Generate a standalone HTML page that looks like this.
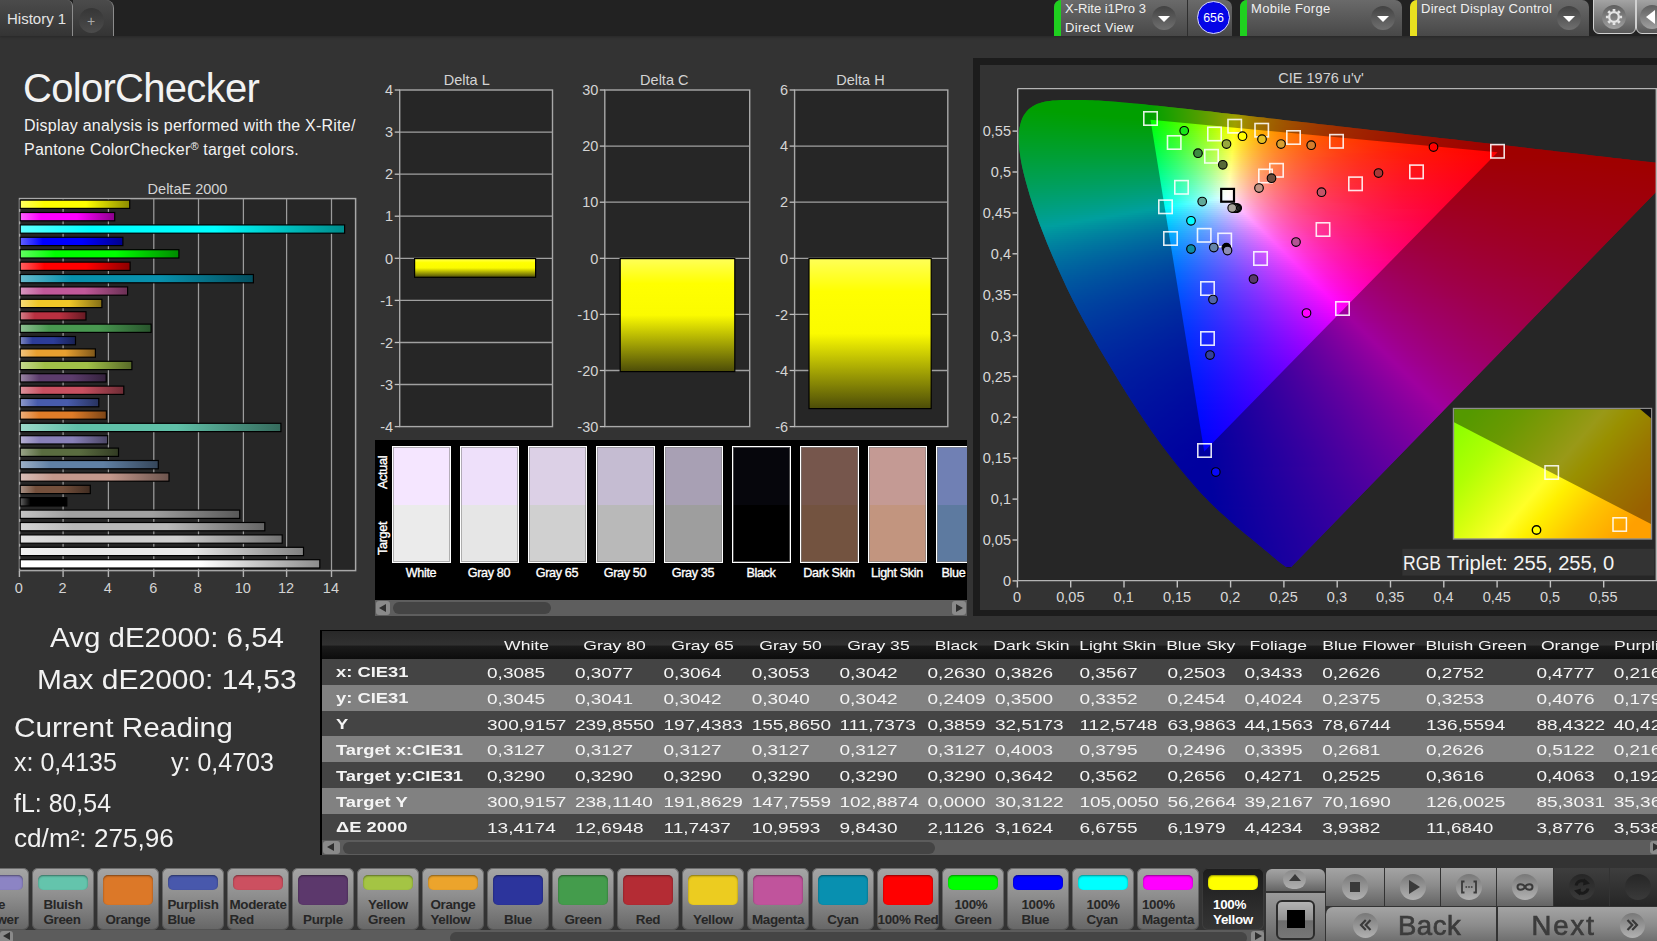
<!DOCTYPE html>
<html lang="en"><head><meta charset="utf-8"><title>ColorChecker</title>
<style>
html,body{margin:0;padding:0}
body{width:1657px;height:941px;overflow:hidden;background:#333;font-family:"Liberation Sans",sans-serif;color:#eee;position:relative}
.abs{position:absolute}
.t{position:absolute;white-space:nowrap;line-height:1}
svg{position:absolute;overflow:hidden}
svg text{font-family:"Liberation Sans",sans-serif}
#topbar{position:absolute;left:0;top:0;width:1657px;height:36.4px;background:#222;box-shadow:0 1px 2px #282828}
.tab{position:absolute;top:0;height:36px;background:linear-gradient(#4b4b4b,#343434);border-right:1px solid #8c8c8c;box-sizing:border-box}
.ibtn{position:absolute;top:0;height:36px;background:linear-gradient(#6a6a6a,#484848);border-radius:7px 7px 0 0;overflow:hidden}
.ibtn .stripe{position:absolute;left:0;top:0;width:7px;height:36px}
.ibtn .lbl{position:absolute;left:11px;font-size:13px;color:#f0f0f0;white-space:nowrap;line-height:1}
.dd{position:absolute;width:24px;height:24px;border-radius:12px;background:linear-gradient(#424242,#707070)}
.dd:after{content:"";position:absolute;left:6px;top:10px;border-left:6px solid transparent;border-right:6px solid transparent;border-top:6px solid #fff}
#cie i{display:block;height:2px}
.cb{position:absolute;top:8px;width:62.6px;height:62px;border-radius:6px;background:linear-gradient(#a6a6a6,#8e8e8e 45%,#666 100%);box-shadow:inset 0 0 0 1px rgba(70,70,70,.6)}
.cb.sel{background:linear-gradient(#1c1c1c,#353535)}
.cb .chip{position:absolute;left:6px;top:7px;width:50px;border-radius:5px;box-shadow:inset 0 1px 2px rgba(0,0,0,.45)}
.cb .lb{position:absolute;left:0;width:100%;text-align:center;font-size:13.4px;font-weight:bold;color:#262626;line-height:15.2px;letter-spacing:-.3px;white-space:nowrap}
.cb .lb span{display:inline-block;text-align:left}
.cb.sel .lb{color:#fff}

</style></head>
<body>
<div id="topbar">
<div class="tab" style="left:0;width:73px;border-radius:0 6px 0 0"><span class="t" style="left:7px;top:11px;font-size:15px;color:#e4e4e4">History 1</span></div>
<div class="tab" style="left:73px;width:41px;border-radius:0 8px 0 0"><div class="abs" style="left:6px;top:8px;width:25px;height:25px;border-radius:13px;background:linear-gradient(#363636,#4b4b4b)"></div><span class="t" style="left:14px;top:13.5px;font-size:14px;color:#a8a8a8">+</span></div>

<div class="ibtn" style="left:1054px;width:178px">
 <div class="stripe" style="background:#1fd01f"></div>
 <span class="lbl" style="top:2px">X-Rite i1Pro 3</span>
 <span class="lbl" style="top:21px;letter-spacing:.3px">Direct View</span>
 <div class="dd" style="left:98px;top:6px"></div>
 <div class="abs" style="left:133px;top:0;width:1px;height:36px;background:#2e2e2e"></div>
 <div class="abs" style="left:143px;top:1px;width:31px;height:31px;border-radius:17px;background:#0505e6;border:1px solid #d8d8ff"><span class="t" style="left:0;top:9.5px;width:31px;text-align:center;font-size:12.4px;color:#fff">656</span></div>
</div>
<div class="ibtn" style="left:1240px;width:162px">
 <div class="stripe" style="background:#1fd01f"></div>
 <span class="lbl" style="top:2px;letter-spacing:.3px">Mobile Forge</span>
 <div class="dd" style="left:131px;top:6px"></div>
</div>
<div class="ibtn" style="left:1410px;width:179px">
 <div class="stripe" style="background:#e8e020"></div>
 <span class="lbl" style="top:2px;letter-spacing:.25px">Direct Display Control</span>
 <div class="dd" style="left:147px;top:6px"></div>
</div>
<div class="abs" style="left:1593.2px;top:-6.7px;width:40.5px;height:38.6px;border:1px solid #d0d0d0;border-radius:6px;background:linear-gradient(#a8a8a8 10%,#585858 100%)">
 <div class="abs" style="left:8.3px;top:10.2px;width:24px;height:24px;border-radius:12px;background:linear-gradient(#5e5e5e,#a0a0a0)"></div>
 <svg style="left:9.3px;top:11.2px" width="22" height="22" viewBox="-11 -11 22 22"><g fill="none" stroke="#e4e4e4"><circle r="4.85" stroke-width="2.3"/><path stroke-width="2.7" d="M0-8.1V-5.6M0 8.1V5.6M-8.1 0H-5.6M8.1 0H5.6M-5.73-5.73L-3.96-3.96M5.73 5.73L3.96 3.96M-5.73 5.73L-3.96 3.96M5.73-5.73L3.96-3.96"/></g></svg>
</div>
<div class="abs" style="left:1636px;top:-6.7px;width:40px;height:38.6px;border:1px solid #d0d0d0;border-radius:6px;background:linear-gradient(#a8a8a8 10%,#585858 100%)">
 <div class="abs" style="left:3.2px;top:10.2px;width:24px;height:24px;border-radius:12px;background:linear-gradient(#5e5e5e,#a0a0a0)"></div>
 <div class="abs" style="left:9.2px;top:15.2px;border-top:7px solid transparent;border-bottom:7px solid transparent;border-right:9px solid #fff"></div>
</div>
</div>
<span class="t" style="left:23px;top:68px;font-size:40px;color:#f2f2f2;letter-spacing:-0.7px">ColorChecker</span>
<span class="t" style="left:24px;top:118px;font-size:16px;color:#f2f2f2;letter-spacing:.23px">Display analysis is performed with the X-Rite/</span>
<span class="t" style="left:24px;top:140.5px;font-size:16px;color:#f2f2f2;letter-spacing:.23px">Pantone ColorChecker<span style="font-size:11px;vertical-align:4.5px;letter-spacing:0">®</span> target colors.</span>
<svg style="left:0;top:180px" width="372" height="430" viewBox="0 180 372 430">
<defs>
<linearGradient id="b0"><stop offset="0" stop-color="#ffff61"/><stop offset=".22" stop-color="#ffff00"/><stop offset=".6" stop-color="#ffff00"/><stop offset="1" stop-color="#8c8c00"/></linearGradient>
<linearGradient id="b1"><stop offset="0" stop-color="#ff61ff"/><stop offset=".22" stop-color="#ff00ff"/><stop offset=".6" stop-color="#ff00ff"/><stop offset="1" stop-color="#8c008c"/></linearGradient>
<linearGradient id="b2"><stop offset="0" stop-color="#61ffff"/><stop offset=".22" stop-color="#00ffff"/><stop offset=".6" stop-color="#00ffff"/><stop offset="1" stop-color="#008c8c"/></linearGradient>
<linearGradient id="b3"><stop offset="0" stop-color="#6161ff"/><stop offset=".22" stop-color="#0000ff"/><stop offset=".6" stop-color="#0000ff"/><stop offset="1" stop-color="#00008c"/></linearGradient>
<linearGradient id="b4"><stop offset="0" stop-color="#61ff61"/><stop offset=".22" stop-color="#00ff00"/><stop offset=".6" stop-color="#00ff00"/><stop offset="1" stop-color="#008c00"/></linearGradient>
<linearGradient id="b5"><stop offset="0" stop-color="#ff6161"/><stop offset=".22" stop-color="#ff0000"/><stop offset=".6" stop-color="#ff0000"/><stop offset="1" stop-color="#8c0000"/></linearGradient>
<linearGradient id="b6"><stop offset="0" stop-color="#66bacc"/><stop offset=".22" stop-color="#0890ac"/><stop offset=".6" stop-color="#0890ac"/><stop offset="1" stop-color="#044f5f"/></linearGradient>
<linearGradient id="b7"><stop offset="0" stop-color="#d897bf"/><stop offset=".22" stop-color="#c05898"/><stop offset=".6" stop-color="#c05898"/><stop offset="1" stop-color="#6a3054"/></linearGradient>
<linearGradient id="b8"><stop offset="0" stop-color="#f6dd7a"/><stop offset=".22" stop-color="#f0c828"/><stop offset=".6" stop-color="#f0c828"/><stop offset="1" stop-color="#846e16"/></linearGradient>
<linearGradient id="b9"><stop offset="0" stop-color="#d37f89"/><stop offset=".22" stop-color="#b83040"/><stop offset=".6" stop-color="#b83040"/><stop offset="1" stop-color="#651a23"/></linearGradient>
<linearGradient id="b10"><stop offset="0" stop-color="#8ebf92"/><stop offset=".22" stop-color="#489850"/><stop offset=".6" stop-color="#489850"/><stop offset="1" stop-color="#28542c"/></linearGradient>
<linearGradient id="b11"><stop offset="0" stop-color="#7c86bf"/><stop offset=".22" stop-color="#2c3c98"/><stop offset=".6" stop-color="#2c3c98"/><stop offset="1" stop-color="#182154"/></linearGradient>
<linearGradient id="b12"><stop offset="0" stop-color="#f1c47f"/><stop offset=".22" stop-color="#e8a030"/><stop offset=".6" stop-color="#e8a030"/><stop offset="1" stop-color="#80581a"/></linearGradient>
<linearGradient id="b13"><stop offset="0" stop-color="#c4d88e"/><stop offset=".22" stop-color="#a0c048"/><stop offset=".6" stop-color="#a0c048"/><stop offset="1" stop-color="#586a28"/></linearGradient>
<linearGradient id="b14"><stop offset="0" stop-color="#9a86a4"/><stop offset=".22" stop-color="#5c3c6c"/><stop offset=".6" stop-color="#5c3c6c"/><stop offset="1" stop-color="#33213b"/></linearGradient>
<linearGradient id="b15"><stop offset="0" stop-color="#dd929c"/><stop offset=".22" stop-color="#c85060"/><stop offset=".6" stop-color="#c85060"/><stop offset="1" stop-color="#6e2c35"/></linearGradient>
<linearGradient id="b16"><stop offset="0" stop-color="#8e9acc"/><stop offset=".22" stop-color="#485cac"/><stop offset=".6" stop-color="#485cac"/><stop offset="1" stop-color="#28335f"/></linearGradient>
<linearGradient id="b17"><stop offset="0" stop-color="#ecae7a"/><stop offset=".22" stop-color="#e07c28"/><stop offset=".6" stop-color="#e07c28"/><stop offset="1" stop-color="#7b4416"/></linearGradient>
<linearGradient id="b18"><stop offset="0" stop-color="#9cd8c9"/><stop offset=".22" stop-color="#60c0a8"/><stop offset=".6" stop-color="#60c0a8"/><stop offset="1" stop-color="#356a5c"/></linearGradient>
<linearGradient id="b19"><stop offset="0" stop-color="#b5b0d3"/><stop offset=".22" stop-color="#8880b8"/><stop offset=".6" stop-color="#8880b8"/><stop offset="1" stop-color="#4b4665"/></linearGradient>
<linearGradient id="b20"><stop offset="0" stop-color="#99a489"/><stop offset=".22" stop-color="#5a6c40"/><stop offset=".6" stop-color="#5a6c40"/><stop offset="1" stop-color="#323b23"/></linearGradient>
<linearGradient id="b21"><stop offset="0" stop-color="#9cb0c7"/><stop offset=".22" stop-color="#6080a4"/><stop offset=".6" stop-color="#6080a4"/><stop offset="1" stop-color="#35465a"/></linearGradient>
<linearGradient id="b22"><stop offset="0" stop-color="#dabfb8"/><stop offset=".22" stop-color="#c4988c"/><stop offset=".6" stop-color="#c4988c"/><stop offset="1" stop-color="#6c544d"/></linearGradient>
<linearGradient id="b23"><stop offset="0" stop-color="#a99286"/><stop offset=".22" stop-color="#74503c"/><stop offset=".6" stop-color="#74503c"/><stop offset="1" stop-color="#402c21"/></linearGradient>
<linearGradient id="b24"><stop offset="0" stop-color="#616161"/><stop offset=".22" stop-color="#000000"/><stop offset=".6" stop-color="#000000"/><stop offset="1" stop-color="#000000"/></linearGradient>
<linearGradient id="b25"><stop offset="0" stop-color="#c4c4c4"/><stop offset=".22" stop-color="#a0a0a0"/><stop offset=".6" stop-color="#a0a0a0"/><stop offset="1" stop-color="#585858"/></linearGradient>
<linearGradient id="b26"><stop offset="0" stop-color="#d3d3d3"/><stop offset=".22" stop-color="#b8b8b8"/><stop offset=".6" stop-color="#b8b8b8"/><stop offset="1" stop-color="#656565"/></linearGradient>
<linearGradient id="b27"><stop offset="0" stop-color="#e2e2e2"/><stop offset=".22" stop-color="#d0d0d0"/><stop offset=".6" stop-color="#d0d0d0"/><stop offset="1" stop-color="#727272"/></linearGradient>
<linearGradient id="b28"><stop offset="0" stop-color="#f1f1f1"/><stop offset=".22" stop-color="#e8e8e8"/><stop offset=".6" stop-color="#e8e8e8"/><stop offset="1" stop-color="#808080"/></linearGradient>
<linearGradient id="b29"><stop offset="0" stop-color="#ffffff"/><stop offset=".22" stop-color="#ffffff"/><stop offset=".6" stop-color="#ffffff"/><stop offset="1" stop-color="#8c8c8c"/></linearGradient>
</defs>
<rect x="19.5" y="198.6" width="336.1" height="372" fill="#262626" stroke="#a8a8a8" stroke-width="1.5"/>
<path d="M63.1 199V570" stroke="#9c9c9c" stroke-width="1.25"/>
<path d="M108.4 199V570" stroke="#9c9c9c" stroke-width="1.25"/>
<path d="M153.8 199V570" stroke="#9c9c9c" stroke-width="1.25"/>
<path d="M198.5 199V570" stroke="#9c9c9c" stroke-width="1.25"/>
<path d="M243.4 199V570" stroke="#9c9c9c" stroke-width="1.25"/>
<path d="M286.6 199V570" stroke="#9c9c9c" stroke-width="1.25"/>
<path d="M331.5 199V570" stroke="#9c9c9c" stroke-width="1.25"/>
<path d="M19.4 571V577" stroke="#b4b4b4" stroke-width="1.4"/>
<text x="18.8" y="592.8" font-size="14.5" fill="#d4d4d4" text-anchor="middle">0</text>
<path d="M63.1 571V577" stroke="#b4b4b4" stroke-width="1.4"/>
<text x="62.5" y="592.8" font-size="14.5" fill="#d4d4d4" text-anchor="middle">2</text>
<path d="M108.4 571V577" stroke="#b4b4b4" stroke-width="1.4"/>
<text x="107.8" y="592.8" font-size="14.5" fill="#d4d4d4" text-anchor="middle">4</text>
<path d="M153.8 571V577" stroke="#b4b4b4" stroke-width="1.4"/>
<text x="153.2" y="592.8" font-size="14.5" fill="#d4d4d4" text-anchor="middle">6</text>
<path d="M198.5 571V577" stroke="#b4b4b4" stroke-width="1.4"/>
<text x="197.9" y="592.8" font-size="14.5" fill="#d4d4d4" text-anchor="middle">8</text>
<path d="M243.4 571V577" stroke="#b4b4b4" stroke-width="1.4"/>
<text x="242.8" y="592.8" font-size="14.5" fill="#d4d4d4" text-anchor="middle">10</text>
<path d="M286.6 571V577" stroke="#b4b4b4" stroke-width="1.4"/>
<text x="286.0" y="592.8" font-size="14.5" fill="#d4d4d4" text-anchor="middle">12</text>
<path d="M331.5 571V577" stroke="#b4b4b4" stroke-width="1.4"/>
<text x="330.9" y="592.8" font-size="14.5" fill="#d4d4d4" text-anchor="middle">14</text>
<rect x="20.2" y="200.10" width="109.5" height="8.3" fill="url(#b0)" stroke="#000" stroke-width="1.2"/>
<rect x="20.2" y="212.50" width="94.5" height="8.3" fill="url(#b1)" stroke="#000" stroke-width="1.2"/>
<rect x="20.2" y="224.90" width="324.4" height="8.3" fill="url(#b2)" stroke="#000" stroke-width="1.2"/>
<rect x="20.2" y="237.30" width="102.7" height="8.3" fill="url(#b3)" stroke="#000" stroke-width="1.2"/>
<rect x="20.2" y="249.70" width="158.7" height="8.3" fill="url(#b4)" stroke="#000" stroke-width="1.2"/>
<rect x="20.2" y="262.10" width="109.9" height="8.3" fill="url(#b5)" stroke="#000" stroke-width="1.2"/>
<rect x="20.2" y="274.50" width="233.2" height="8.3" fill="url(#b6)" stroke="#000" stroke-width="1.2"/>
<rect x="20.2" y="286.90" width="107.4" height="8.3" fill="url(#b7)" stroke="#000" stroke-width="1.2"/>
<rect x="20.2" y="299.30" width="81.7" height="8.3" fill="url(#b8)" stroke="#000" stroke-width="1.2"/>
<rect x="20.2" y="311.70" width="65.8" height="8.3" fill="url(#b9)" stroke="#000" stroke-width="1.2"/>
<rect x="20.2" y="324.10" width="130.9" height="8.3" fill="url(#b10)" stroke="#000" stroke-width="1.2"/>
<rect x="20.2" y="336.50" width="55.3" height="8.3" fill="url(#b11)" stroke="#000" stroke-width="1.2"/>
<rect x="20.2" y="348.90" width="75.2" height="8.3" fill="url(#b12)" stroke="#000" stroke-width="1.2"/>
<rect x="20.2" y="361.30" width="111.7" height="8.3" fill="url(#b13)" stroke="#000" stroke-width="1.2"/>
<rect x="20.2" y="373.70" width="86.0" height="8.3" fill="url(#b14)" stroke="#000" stroke-width="1.2"/>
<rect x="20.2" y="386.10" width="103.6" height="8.3" fill="url(#b15)" stroke="#000" stroke-width="1.2"/>
<rect x="20.2" y="398.50" width="78.6" height="8.3" fill="url(#b16)" stroke="#000" stroke-width="1.2"/>
<rect x="20.2" y="410.90" width="86.2" height="8.3" fill="url(#b17)" stroke="#000" stroke-width="1.2"/>
<rect x="20.2" y="423.30" width="260.7" height="8.3" fill="url(#b18)" stroke="#000" stroke-width="1.2"/>
<rect x="20.2" y="435.70" width="87.5" height="8.3" fill="url(#b19)" stroke="#000" stroke-width="1.2"/>
<rect x="20.2" y="448.10" width="98.3" height="8.3" fill="url(#b20)" stroke="#000" stroke-width="1.2"/>
<rect x="20.2" y="460.50" width="138.1" height="8.3" fill="url(#b21)" stroke="#000" stroke-width="1.2"/>
<rect x="20.2" y="472.90" width="148.8" height="8.3" fill="url(#b22)" stroke="#000" stroke-width="1.2"/>
<rect x="20.2" y="485.30" width="70.1" height="8.3" fill="url(#b23)" stroke="#000" stroke-width="1.2"/>
<rect x="20.2" y="497.70" width="46.6" height="8.3" fill="url(#b24)" stroke="#000" stroke-width="1.2"/>
<rect x="20.2" y="510.10" width="219.5" height="8.3" fill="url(#b25)" stroke="#000" stroke-width="1.2"/>
<rect x="20.2" y="522.50" width="244.6" height="8.3" fill="url(#b26)" stroke="#000" stroke-width="1.2"/>
<rect x="20.2" y="534.90" width="262.0" height="8.3" fill="url(#b27)" stroke="#000" stroke-width="1.2"/>
<rect x="20.2" y="547.30" width="283.3" height="8.3" fill="url(#b28)" stroke="#000" stroke-width="1.2"/>
<rect x="20.2" y="559.70" width="299.6" height="8.3" fill="url(#b29)" stroke="#000" stroke-width="1.2"/>
<text x="187.5" y="193.8" font-size="14.5" fill="#d4d4d4" text-anchor="middle">DeltaE 2000</text>
</svg>
<span class="t" style="left:50px;top:623.9px;font-size:28.1px;color:#f2f2f2;transform:scaleX(1.05);transform-origin:0 0">Avg dE2000: 6,54</span>
<span class="t" style="left:37px;top:664.6px;font-size:28.2px;color:#f2f2f2;transform:scaleX(1.062);transform-origin:0 0">Max dE2000: 14,53</span>
<span class="t" style="left:14px;top:712.6px;font-size:28.35px;color:#f2f2f2;transform:scaleX(1.052);transform-origin:0 0">Current Reading</span>
<span class="t" style="left:14px;top:749.9px;font-size:25.1px;color:#f2f2f2;transform:scaleX(0.996);transform-origin:0 0">x: 0,4135</span>
<span class="t" style="left:171px;top:749.9px;font-size:25.1px;color:#f2f2f2;transform:scaleX(0.996);transform-origin:0 0">y: 0,4703</span>
<span class="t" style="left:14px;top:791.3px;font-size:25.1px;color:#f2f2f2;transform:scaleX(0.993);transform-origin:0 0">fL: 80,54</span>
<span class="t" style="left:14px;top:825.8px;font-size:25.1px;color:#f2f2f2;transform:scaleX(1.042);transform-origin:0 0">cd/m²: 275,96</span>
<svg style="left:370px;top:60px" width="596" height="379" viewBox="370 60 596 379">
<defs><linearGradient id="yb" x1="0" y1="0" x2="0" y2="1"><stop offset="0" stop-color="#ffff58"/><stop offset=".22" stop-color="#ffff00"/><stop offset=".5" stop-color="#fbfb00"/><stop offset="1" stop-color="#4c4c08"/></linearGradient></defs>
<rect x="399.7" y="90.0" width="152.8" height="336.6" fill="#262626" stroke="#a8a8a8" stroke-width="1.4"/>
<path d="M394.7 90.0H399.7" stroke="#c0c0c0" stroke-width="1.3"/>
<text x="393.2" y="95.2" font-size="14.5" fill="#d4d4d4" text-anchor="end">4</text>
<path d="M399.7 132.1H552.5" stroke="#a0a0a0" stroke-width="1.3"/>
<path d="M394.7 132.1H399.7" stroke="#c0c0c0" stroke-width="1.3"/>
<text x="393.2" y="137.3" font-size="14.5" fill="#d4d4d4" text-anchor="end">3</text>
<path d="M399.7 174.2H552.5" stroke="#a0a0a0" stroke-width="1.3"/>
<path d="M394.7 174.2H399.7" stroke="#c0c0c0" stroke-width="1.3"/>
<text x="393.2" y="179.3" font-size="14.5" fill="#d4d4d4" text-anchor="end">2</text>
<path d="M399.7 216.2H552.5" stroke="#a0a0a0" stroke-width="1.3"/>
<path d="M394.7 216.2H399.7" stroke="#c0c0c0" stroke-width="1.3"/>
<text x="393.2" y="221.4" font-size="14.5" fill="#d4d4d4" text-anchor="end">1</text>
<path d="M399.7 258.3H552.5" stroke="#a0a0a0" stroke-width="1.3"/>
<path d="M394.7 258.3H399.7" stroke="#c0c0c0" stroke-width="1.3"/>
<text x="393.2" y="263.5" font-size="14.5" fill="#d4d4d4" text-anchor="end">0</text>
<path d="M399.7 300.4H552.5" stroke="#a0a0a0" stroke-width="1.3"/>
<path d="M394.7 300.4H399.7" stroke="#c0c0c0" stroke-width="1.3"/>
<text x="393.2" y="305.6" font-size="14.5" fill="#d4d4d4" text-anchor="end">-1</text>
<path d="M399.7 342.5H552.5" stroke="#a0a0a0" stroke-width="1.3"/>
<path d="M394.7 342.5H399.7" stroke="#c0c0c0" stroke-width="1.3"/>
<text x="393.2" y="347.7" font-size="14.5" fill="#d4d4d4" text-anchor="end">-2</text>
<path d="M399.7 384.5H552.5" stroke="#a0a0a0" stroke-width="1.3"/>
<path d="M394.7 384.5H399.7" stroke="#c0c0c0" stroke-width="1.3"/>
<text x="393.2" y="389.7" font-size="14.5" fill="#d4d4d4" text-anchor="end">-3</text>
<path d="M394.7 426.6H399.7" stroke="#c0c0c0" stroke-width="1.3"/>
<text x="393.2" y="431.8" font-size="14.5" fill="#d4d4d4" text-anchor="end">-4</text>
<rect x="414.6" y="258.6" width="121.0" height="18.7" fill="url(#yb)" stroke="#000" stroke-width="1.2"/>
<text x="466.8" y="85" font-size="14.5" fill="#d4d4d4" text-anchor="middle">Delta L</text>
<rect x="604.8" y="90.0" width="144.9" height="336.6" fill="#262626" stroke="#a8a8a8" stroke-width="1.4"/>
<path d="M599.8 90.0H604.8" stroke="#c0c0c0" stroke-width="1.3"/>
<text x="598.3" y="95.2" font-size="14.5" fill="#d4d4d4" text-anchor="end">30</text>
<path d="M604.8 146.1H749.7" stroke="#a0a0a0" stroke-width="1.3"/>
<path d="M599.8 146.1H604.8" stroke="#c0c0c0" stroke-width="1.3"/>
<text x="598.3" y="151.3" font-size="14.5" fill="#d4d4d4" text-anchor="end">20</text>
<path d="M604.8 202.2H749.7" stroke="#a0a0a0" stroke-width="1.3"/>
<path d="M599.8 202.2H604.8" stroke="#c0c0c0" stroke-width="1.3"/>
<text x="598.3" y="207.4" font-size="14.5" fill="#d4d4d4" text-anchor="end">10</text>
<path d="M604.8 258.3H749.7" stroke="#a0a0a0" stroke-width="1.3"/>
<path d="M599.8 258.3H604.8" stroke="#c0c0c0" stroke-width="1.3"/>
<text x="598.3" y="263.5" font-size="14.5" fill="#d4d4d4" text-anchor="end">0</text>
<path d="M604.8 314.4H749.7" stroke="#a0a0a0" stroke-width="1.3"/>
<path d="M599.8 314.4H604.8" stroke="#c0c0c0" stroke-width="1.3"/>
<text x="598.3" y="319.6" font-size="14.5" fill="#d4d4d4" text-anchor="end">-10</text>
<path d="M604.8 370.5H749.7" stroke="#a0a0a0" stroke-width="1.3"/>
<path d="M599.8 370.5H604.8" stroke="#c0c0c0" stroke-width="1.3"/>
<text x="598.3" y="375.7" font-size="14.5" fill="#d4d4d4" text-anchor="end">-20</text>
<path d="M599.8 426.6H604.8" stroke="#c0c0c0" stroke-width="1.3"/>
<text x="598.3" y="431.8" font-size="14.5" fill="#d4d4d4" text-anchor="end">-30</text>
<rect x="620.2" y="258.6" width="114.6" height="113.0" fill="url(#yb)" stroke="#000" stroke-width="1.2"/>
<text x="664.3" y="85" font-size="14.5" fill="#d4d4d4" text-anchor="middle">Delta C</text>
<rect x="794.6" y="90.0" width="153.2" height="336.6" fill="#262626" stroke="#a8a8a8" stroke-width="1.4"/>
<path d="M789.6 90.0H794.6" stroke="#c0c0c0" stroke-width="1.3"/>
<text x="788.1" y="95.2" font-size="14.5" fill="#d4d4d4" text-anchor="end">6</text>
<path d="M794.6 146.1H947.8" stroke="#a0a0a0" stroke-width="1.3"/>
<path d="M789.6 146.1H794.6" stroke="#c0c0c0" stroke-width="1.3"/>
<text x="788.1" y="151.3" font-size="14.5" fill="#d4d4d4" text-anchor="end">4</text>
<path d="M794.6 202.2H947.8" stroke="#a0a0a0" stroke-width="1.3"/>
<path d="M789.6 202.2H794.6" stroke="#c0c0c0" stroke-width="1.3"/>
<text x="788.1" y="207.4" font-size="14.5" fill="#d4d4d4" text-anchor="end">2</text>
<path d="M794.6 258.3H947.8" stroke="#a0a0a0" stroke-width="1.3"/>
<path d="M789.6 258.3H794.6" stroke="#c0c0c0" stroke-width="1.3"/>
<text x="788.1" y="263.5" font-size="14.5" fill="#d4d4d4" text-anchor="end">0</text>
<path d="M794.6 314.4H947.8" stroke="#a0a0a0" stroke-width="1.3"/>
<path d="M789.6 314.4H794.6" stroke="#c0c0c0" stroke-width="1.3"/>
<text x="788.1" y="319.6" font-size="14.5" fill="#d4d4d4" text-anchor="end">-2</text>
<path d="M794.6 370.5H947.8" stroke="#a0a0a0" stroke-width="1.3"/>
<path d="M789.6 370.5H794.6" stroke="#c0c0c0" stroke-width="1.3"/>
<text x="788.1" y="375.7" font-size="14.5" fill="#d4d4d4" text-anchor="end">-4</text>
<path d="M789.6 426.6H794.6" stroke="#c0c0c0" stroke-width="1.3"/>
<text x="788.1" y="431.8" font-size="14.5" fill="#d4d4d4" text-anchor="end">-6</text>
<rect x="809.0" y="258.6" width="122.2" height="150.0" fill="url(#yb)" stroke="#000" stroke-width="1.2"/>
<text x="860.5" y="85" font-size="14.5" fill="#d4d4d4" text-anchor="middle">Delta H</text>
</svg>
<div class="abs" style="left:375px;top:439.5px;width:592px;height:160.5px;background:#000;overflow:hidden">
<span class="t" style="left:2px;top:49px;font-size:12.6px;color:#fff;transform:rotate(-90deg);transform-origin:0 0;-webkit-text-stroke:.35px #fff;letter-spacing:-.3px">Actual</span>
<span class="t" style="left:2px;top:115px;font-size:12.6px;color:#fff;transform:rotate(-90deg);transform-origin:0 0;-webkit-text-stroke:.35px #fff;letter-spacing:-.3px">Target</span>
<div class="abs" style="left:17px;top:6.5px;width:56.7px;height:115px;border:1px solid #fff;background:linear-gradient(#f5e6ff 50.4%,#ebebeb 50.4%);box-shadow:inset 0 0 0 1px rgba(128,128,128,.55)"></div>
<span class="t" style="left:2px;top:127.8px;width:88px;text-align:center;font-size:12.6px;color:#fff;-webkit-text-stroke:.35px #fff;letter-spacing:-.35px">White</span>
<div class="abs" style="left:85px;top:6.5px;width:56.7px;height:115px;border:1px solid #fff;background:linear-gradient(#eee0fa 50.4%,#e6e6e6 50.4%);box-shadow:inset 0 0 0 1px rgba(128,128,128,.55)"></div>
<span class="t" style="left:70px;top:127.8px;width:88px;text-align:center;font-size:12.6px;color:#fff;-webkit-text-stroke:.35px #fff;letter-spacing:-.35px">Gray 80</span>
<div class="abs" style="left:153px;top:6.5px;width:56.7px;height:115px;border:1px solid #fff;background:linear-gradient(#dcd0e6 50.4%,#d0d0d0 50.4%);box-shadow:inset 0 0 0 1px rgba(128,128,128,.55)"></div>
<span class="t" style="left:138px;top:127.8px;width:88px;text-align:center;font-size:12.6px;color:#fff;-webkit-text-stroke:.35px #fff;letter-spacing:-.35px">Gray 65</span>
<div class="abs" style="left:221px;top:6.5px;width:56.7px;height:115px;border:1px solid #fff;background:linear-gradient(#c5bcd2 50.4%,#b9b9b9 50.4%);box-shadow:inset 0 0 0 1px rgba(128,128,128,.55)"></div>
<span class="t" style="left:206px;top:127.8px;width:88px;text-align:center;font-size:12.6px;color:#fff;-webkit-text-stroke:.35px #fff;letter-spacing:-.35px">Gray 50</span>
<div class="abs" style="left:289px;top:6.5px;width:56.7px;height:115px;border:1px solid #fff;background:linear-gradient(#a8a0b4 50.4%,#9e9e9e 50.4%);box-shadow:inset 0 0 0 1px rgba(128,128,128,.55)"></div>
<span class="t" style="left:274px;top:127.8px;width:88px;text-align:center;font-size:12.6px;color:#fff;-webkit-text-stroke:.35px #fff;letter-spacing:-.35px">Gray 35</span>
<div class="abs" style="left:357px;top:6.5px;width:56.7px;height:115px;border:1px solid #fff;background:linear-gradient(#06060c 50.4%,#000000 50.4%);box-shadow:inset 0 0 0 1px rgba(128,128,128,.55)"></div>
<span class="t" style="left:342px;top:127.8px;width:88px;text-align:center;font-size:12.6px;color:#fff;-webkit-text-stroke:.35px #fff;letter-spacing:-.35px">Black</span>
<div class="abs" style="left:425px;top:6.5px;width:56.7px;height:115px;border:1px solid #fff;background:linear-gradient(#76564c 50.4%,#735340 50.4%);box-shadow:inset 0 0 0 1px rgba(128,128,128,.55)"></div>
<span class="t" style="left:410px;top:127.8px;width:88px;text-align:center;font-size:12.6px;color:#fff;-webkit-text-stroke:.35px #fff;letter-spacing:-.35px">Dark Skin</span>
<div class="abs" style="left:493px;top:6.5px;width:56.7px;height:115px;border:1px solid #fff;background:linear-gradient(#c49a94 50.4%,#c2957f 50.4%);box-shadow:inset 0 0 0 1px rgba(128,128,128,.55)"></div>
<span class="t" style="left:478px;top:127.8px;width:88px;text-align:center;font-size:12.6px;color:#fff;-webkit-text-stroke:.35px #fff;letter-spacing:-.35px">Light Skin</span>
<div class="abs" style="left:561px;top:6.5px;width:56.7px;height:115px;border:1px solid #fff;background:linear-gradient(#7080b4 50.4%,#5d7aa0 50.4%);box-shadow:inset 0 0 0 1px rgba(128,128,128,.55)"></div>
<span class="t" style="left:546px;top:127.8px;width:88px;text-align:center;font-size:12.6px;color:#fff;-webkit-text-stroke:.35px #fff;letter-spacing:-.35px">Blue Sky</span>
</div>
<div class="abs" style="left:375px;top:600px;width:592px;height:16px;background:#5e5e5e"></div>
<div class="abs" style="left:393px;top:602px;width:158px;height:12px;border-radius:6px;background:#444"></div>
<div class="abs" style="left:376px;top:601px;width:14px;height:14px;border-radius:3px;background:#8a8a8a"></div><div class="abs" style="left:379px;top:603.5px;border-top:4.5px solid transparent;border-bottom:4.5px solid transparent;border-right:7px solid #2e2e2e"></div>
<div class="abs" style="left:952px;top:601px;width:14px;height:14px;border-radius:3px;background:#8a8a8a"></div><div class="abs" style="left:956px;top:603.5px;border-top:4.5px solid transparent;border-bottom:4.5px solid transparent;border-left:7px solid #2e2e2e"></div>
<div class="abs" style="left:973.2px;top:58.1px;width:690px;height:558.3px;background:#1c1c1c"></div>
<div class="abs" style="left:979.8px;top:64.7px;width:690px;height:545.4px;background:#333"></div>
<div id="cie" class="abs" style="left:1018px;top:89px;width:639px;height:492px;background:#262626;overflow:hidden">
<i></i>
<i></i>
<i></i>
<i></i>
<i></i>
<i style="background:linear-gradient(90deg,#0f0 43px,#0f0 68px)"></i>
<i style="background:linear-gradient(90deg,#0f0 22px,#0f0 103px)"></i>
<i style="background:linear-gradient(90deg,#0f0 16px,#0f0 125px)"></i>
<i style="background:linear-gradient(90deg,#0f0 12px,#0f0 130px,#2f0 145px)"></i>
<i style="background:linear-gradient(90deg,#0f0 9px,#0f0 130px,#2f0 145px,#52ff00 164px)"></i>
<i style="background:linear-gradient(90deg,#00ff03 6px,#0f0 28px,#0f0 131px,#3fff00 157px,#85ff00 182px)"></i>
<i style="background:linear-gradient(90deg,#00ff07 5px,#0f0 49px,#0f0 131px,#2bff00 149px,#5aff00 167px,#8bff00 184px,#bfff00 200px)"></i>
<i style="background:linear-gradient(90deg,#00ff0a 3px,#0f0 71px,#01ff00 132px,#39ff00 155px,#76ff00 177px,#b8ff00 198px,#fcff00 217px)"></i>
<i style="background:linear-gradient(90deg,#00ff0e 2px,#0f0 92px,#0f0 132px,#39ff00 155px,#76ff00 177px,#b8ff00 198px,#fcff00 217px,#fffe00 218px,#ffe200 226px,#ffc800 235px)"></i>
<i style="background:linear-gradient(90deg,#0f1 1px,#0f0 113px,#0f0 132px,#38ff00 155px,#76ff00 177px,#b9ff00 198px,#fdff00 217px,#ffca00 234px,#ffa000 252px)"></i>
<i style="background:linear-gradient(90deg,#00ff14 0px,#00ff01 132px,#3f0 153px,#73ff00 176px,#b5ff00 197px,#feff00 217px,#ffd700 229px,#ffb700 241px,#ff9a00 255px,#ff8100 270px)"></i>
<i style="background:linear-gradient(90deg,#00ff18 0px,#00ff05 133px,#3aff00 156px,#79ff00 178px,#b9ff00 198px,#feff00 217px,#ffd100 231px,#ffa900 247px,#ff8600 266px,#ff6a00 287px)"></i>
<i style="background:linear-gradient(90deg,#00ff1b 0px,#00ff09 133px,#37ff05 155px,#75ff00 177px,#b6ff00 197px,#ff0 217px,#ffe200 225px,#ffca00 233px,#ffb100 243px,#ff9c00 253px,#f70 276px,#ff5800 304px)"></i>
<i style="background:linear-gradient(90deg,#00ff1e 0px,#00ff0e 133px,#31ff0a 153px,#72ff05 176px,#b6ff00 197px,#fcff00 216px,#fffe00 217px,#ffde00 226px,#ffbf00 237px,#ffa700 247px,#ff9000 259px,#ff6900 287px,#ff4800 322px)"></i>
<i style="background:linear-gradient(90deg,#0f2 0px,#01ff12 134px,#3bff0e 157px,#78ff0a 178px,#baff06 198px,#fdff01 216px,#fffd01 217px,#ffd700 228px,#fb0 238px,#ffa000 250px,#ff8700 264px,#ff7000 280px,#ff5d00 297px,#ff3b00 339px)"></i>
<i style="background:linear-gradient(90deg,#00ff25 0px,#00ff17 134px,#38ff13 156px,#75ff0f 177px,#b7ff0b 197px,#fdff07 216px,#ffd603 228px,#ffb600 240px,#ff9800 254px,#ff7d00 270px,#f60 288px,#ff5200 308px,#ff4000 331px,#ff3000 357px)"></i>
<i style="background:linear-gradient(90deg,#00ff29 0px,#00ff1b 134px,#35ff18 155px,#75ff15 177px,#b7ff11 197px,#feff0d 216px,#ffd608 228px,#ffb305 241px,#ff9301 256px,#f70 274px,#ff5f00 294px,#ff4a00 317px,#ff3700 344px,#ff2700 374px)"></i>
<i style="background:linear-gradient(90deg,#00ff2c 0px,#01ff20 135px,#3aff1d 157px,#78ff1a 178px,#bbff16 198px,#ffff13 216px,#ffd20d 229px,#ffad09 243px,#ff8c04 260px,#ff6f01 279px,#ff5700 301px,#ff4100 327px,#ff2f00 357px,#ff1f00 391px)"></i>
<i style="background:linear-gradient(90deg,#00ff30 0px,#00ff24 135px,#36ff22 156px,#74ff1f 177px,#b7ff1c 197px,#fcff19 215px,#fffe19 216px,#ffe415 223px,#ffcb11 231px,#ffa80c 245px,#ff8607 263px,#ff6903 284px,#ff5000 308px,#ff3a00 337px,#ff2700 370px,#ff1700 409px)"></i>
<i style="background:linear-gradient(90deg,#0f3 0px,#00ff29 135px,#33ff27 155px,#74ff25 177px,#b4ff22 196px,#fffd1f 216px,#ffcd17 230px,#ffa510 246px,#ff820b 265px,#ff6306 288px,#ff4902 315px,#ff3400 346px,#ff2100 383px,#f10 426px)"></i>
<i style="background:linear-gradient(90deg,#00ff37 0px,#01ff2e 136px,#38ff2c 157px,#74ff2a 177px,#b1ff28 195px,#fdff25 215px,#fffd25 216px,#ffe320 223px,#ffc91b 231px,#ffa014 248px,#ff7b0d 269px,#ff5d08 293px,#ff4303 322px,#ff2d00 356px,#ff1b00 396px,#ff0b00 444px)"></i>
<i style="background:linear-gradient(90deg,#00ff3a 0px,#0f3 136px,#38ff31 157px,#74ff30 177px,#adff2e 194px,#feff2b 215px,#fffc2b 216px,#ffe226 223px,#ffc921 231px,#ff9d18 249px,#ff7710 271px,#ff580a 297px,#ff3e05 328px,#ff2800 365px,#ff1600 409px,#ff0600 461px)"></i>
<i style="background:linear-gradient(90deg,#00ff3e 0px,#00ff38 136px,#34ff37 156px,#74ff35 177px,#b8ff33 197px,#ffff32 215px,#ffe12b 223px,#ffc826 231px,#ffb020 240px,#ff9a1c 250px,#ff7413 273px,#ff540c 300px,#ff3a07 333px,#ff2402 373px,#f10 421px,#ff0200 478px)"></i>
<i style="background:linear-gradient(90deg,#00ff41 0px,#01ff3d 137px,#39ff3c 158px,#77ff3b 178px,#b9ff3a 197px,#fffe38 215px,#ffe031 223px,#ffc72b 231px,#ffad25 241px,#ff971f 251px,#ff7016 275px,#ff4f0e 305px,#ff3408 342px,#ff1d02 386px,#ff0900 446px,#f00 496px)"></i>
<i style="background:linear-gradient(90deg,#00ff45 0px,#00ff42 137px,#39ff41 158px,#76ff41 178px,#b5ff40 196px,#fffe3e 215px,#ffdf37 223px,#ffc32f 232px,#ffaa29 242px,#ff9223 253px,#ff7e1d 265px,#ff6a18 279px,#ff4a10 310px,#ff2e09 351px,#ff1703 402px,#f00 483px,#f00 514px)"></i>
<i style="background:linear-gradient(90deg,#00ff49 0px,#00ff47 137px,#33ff47 156px,#73ff46 177px,#aeff46 194px,#fffd45 215px,#ffdb3b 224px,#ffbf34 233px,#ffa62d 243px,#ff8e26 255px,#ff7820 268px,#ff661b 282px,#ff4512 315px,#ff2809 361px,#ff1003 419px,#f00 482px,#f00 531px)"></i>
<i style="background:linear-gradient(90deg,#00ff4d 0px,#01ff4c 138px,#38ff4c 158px,#73ff4c 177px,#aeff4c 194px,#feff4c 214px,#fffc4b 215px,#ffda41 224px,#ffbf39 233px,#ffa331 244px,#ff8b29 256px,#ff7523 270px,#ff611d 285px,#ff4113 320px,#ff220a 371px,#ff0b03 436px,#f00 480px,#f00 548px)"></i>
<i style="background:linear-gradient(90deg,#00ff50 0px,#00ff52 138px,#37ff52 158px,#73ff52 177px,#b6ff53 196px,#feff53 214px,#fffb52 215px,#ffd947 224px,#ffbb3d 234px,#ffa035 245px,#ff872d 258px,#ff7126 272px,#ff5d1f 288px,#ff3c15 325px,#ff2c0f 351px,#ff1d0b 381px,#ff0503 455px,#ff0001 478px,#f00 566px)"></i>
<i style="background:linear-gradient(90deg,#00ff54 0px,#00ff57 138px,#34ff58 157px,#76ff58 178px,#b6ff59 196px,#ffff5a 214px,#ffdc4e 223px,#ffbd43 233px,#ff9f39 245px,#ff8631 258px,#ff6f29 273px,#ff5b22 289px,#ff3916 328px,#ff2811 357px,#ff190b 390px,#ff0103 471px,#f00 583px)"></i>
<i style="background:linear-gradient(90deg,#00ff58 0px,#01ff5c 139px,#39ff5d 159px,#75ff5e 178px,#b2ff60 195px,#fffe60 214px,#ffdb54 223px,#ffb948 234px,#ff9c3d 246px,#ff8334 259px,#ff6d2c 274px,#ff5824 291px,#ff461e 310px,#ff3618 332px,#ff2612 360px,#ff170d 393px,#ff0004 474px,#f00 541px,#f00 600px)"></i>
<i style="background:linear-gradient(90deg,#00ff5c 0px,#00ff62 139px,#39ff63 159px,#75ff65 178px,#b3ff66 195px,#fffd67 214px,#ffd758 224px,#ffb64c 235px,#ff9941 247px,#ff7f37 261px,#ff682e 277px,#ff5526 294px,#ff4220 314px,#ff3219 337px,#ff160e 396px,#ff0006 472px,#f00 562px,#f00 618px)"></i>
<i style="background:linear-gradient(90deg,#00ff60 0px,#00ff67 139px,#32ff69 157px,#72ff6b 177px,#abff6d 193px,#fdff6f 213px,#fffc6e 214px,#ffd65e 224px,#ffb551 235px,#ff9645 248px,#ff7d3a 262px,#ff6631 278px,#ff5128 297px,#ff3f21 318px,#ff2f1b 341px,#ff1510 398px,#ff0008 470px,#f00 584px,#f00 635px)"></i>
<i style="background:linear-gradient(90deg,#00ff64 0px,#01ff6d 140px,#37ff6f 159px,#71ff71 177px,#b7ff74 196px,#feff76 213px,#fffb75 214px,#ffd564 224px,#ffb456 235px,#ff9549 248px,#ff7c3e 262px,#ff6535 278px,#ff502c 297px,#ff3e24 318px,#ff2e1d 342px,#ff1412 397px,#ff0009 468px,#f00 639px)"></i>
<i style="background:linear-gradient(90deg,#00ff68 1px,#00ff73 140px,#3aff75 160px,#78ff78 179px,#bbff7b 197px,#ffff7e 213px,#ffd76c 223px,#ffb65d 234px,#ff974f 247px,#ff7d43 261px,#ff6639 277px,#ff502f 296px,#ff3e27 317px,#ff2e20 340px,#ff1514 395px,#ff000b 466px,#f00 639px)"></i>
<i style="background:linear-gradient(90deg,#00ff6c 1px,#00ff79 140px,#36ff7b 159px,#74ff7e 178px,#b4ff82 195px,#fffe85 213px,#ffd772 223px,#ffb562 234px,#ff9653 247px,#ff7c47 261px,#ff653c 277px,#ff4f32 296px,#ff3d2a 317px,#ff2e22 340px,#ff1416 395px,#ff000d 464px,#f00 639px)"></i>
<i style="background:linear-gradient(90deg,#00ff70 1px,#01ff7f 141px,#39ff82 160px,#74ff85 178px,#b0ff88 194px,#fffd8c 213px,#ffd678 223px,#ffb468 234px,#ff9558 247px,#ff7b4b 261px,#ff6440 277px,#ff4f35 296px,#ff3d2c 317px,#ff2d25 340px,#ff1418 394px,#ff000e 462px,#ff0001 639px)"></i>
<i style="background:linear-gradient(90deg,#00ff74 2px,#00ff85 141px,#38ff88 160px,#74ff8c 178px,#b0ff90 194px,#fdff94 212px,#fffc93 213px,#ffd57f 223px,#ffb36d 234px,#ff945d 247px,#ff7a50 261px,#ff6344 277px,#ff4e39 296px,#ff3c2f 317px,#ff2c27 340px,#ff141a 393px,#ff0010 460px,#ff0002 639px)"></i>
<i style="background:linear-gradient(90deg,#00ff78 2px,#00ff8b 141px,#34ff8e 159px,#70ff92 177px,#a8ff96 192px,#feff9c 212px,#fffc9b 213px,#ffd485 223px,#ffb273 234px,#ff9362 247px,#ff7954 261px,#ff6247 277px,#ff4d3c 296px,#ff3b32 317px,#ff2c2a 340px,#ff131c 392px,#ff0012 458px,#ff0003 639px)"></i>
<i style="background:linear-gradient(90deg,#00ff7c 3px,#00ff91 141px,#31ff95 158px,#74ff9a 178px,#b9ff9f 196px,#ffffa4 212px,#ffd68d 222px,#ffb47a 233px,#ff9468 246px,#ff7a59 260px,#ff634c 276px,#ff4e40 294px,#ff3c36 315px,#ff2c2c 339px,#ff131f 391px,#ff0014 456px,#ff0004 639px)"></i>
<i style="background:linear-gradient(90deg,#00ff80 3px,#00ff8b 79px,#00ff97 142px,#3aff9c 161px,#77ffa1 179px,#b5ffa6 195px,#fffeac 212px,#ffd594 222px,#ffb37f 233px,#ff956e 245px,#ff7b5e 259px,#ff6350 275px,#ff4f44 293px,#ff3c39 314px,#ff2c2f 338px,#ff1321 389px,#ff0015 454px,#ff0005 639px)"></i>
<i style="background:linear-gradient(90deg,#00ff85 4px,#00ff90 79px,#00ff9d 142px,#36ffa2 160px,#73ffa8 178px,#b1ffae 194px,#fffeb4 212px,#ffd89d 221px,#ffb587 232px,#ff9573 245px,#ff7a62 259px,#ff6254 275px,#ff4e47 293px,#ff3b3c 314px,#ff2b32 338px,#ff1323 388px,#ff0017 452px,#ff000e 535px,#ff0006 639px)"></i>
<i style="background:linear-gradient(90deg,#00ff89 4px,#00ff95 79px,#00ffa4 142px,#2fffa8 158px,#6fffaf 177px,#adffb5 193px,#fdffbd 211px,#fffdbb 212px,#ffd7a3 221px,#ffb48d 232px,#ff9478 245px,#ff7967 259px,#ff6158 275px,#ff4d4b 293px,#ff3b3f 314px,#ff2a34 338px,#ff1325 388px,#ff0019 450px,#ff000f 533px,#ff0007 639px)"></i>
<i style="background:linear-gradient(90deg,#00ff8d 5px,#00ff9a 80px,#0fa 143px,#38ffb0 161px,#73ffb6 178px,#adffbd 193px,#feffc5 211px,#fffcc3 212px,#ffd6aa 221px,#ffb392 232px,#ff937d 245px,#ff786b 259px,#ff615c 275px,#ff4c4e 293px,#ff3a42 314px,#ff2a37 338px,#ff1327 387px,#ff001b 448px,#ff0010 532px,#ff0008 639px)"></i>
<i style="background:linear-gradient(90deg,#00ff92 5px,#00ffa0 80px,#00ffb1 143px,#34ffb7 160px,#6fffbe 177px,#b6ffc6 195px,#feffce 211px,#fffbcb 212px,#ffd5b1 221px,#ffb298 232px,#ff9282 245px,#ff7770 259px,#ff605f 275px,#ff4b51 293px,#ff3944 314px,#ff2939 338px,#ff122a 386px,#ff001d 446px,#ff0012 531px,#ff0009 639px)"></i>
<i style="background:linear-gradient(90deg,#00ff96 6px,#00ffa5 81px,#00ffb8 143px,#30ffbe 159px,#72ffc6 178px,#b6ffce 195px,#ffffd6 211px,#ffd8ba 220px,#ffb4a0 231px,#ff958a 243px,#ff7a76 257px,#ff6265 273px,#ff4d56 291px,#ff3a49 312px,#ff2a3d 336px,#ff122c 385px,#ff001f 445px,#ff0013 530px,#ff000a 639px)"></i>
<i style="background:linear-gradient(90deg,#00ff9b 7px,#00ffab 82px,#00ffbf 144px,#39ffc6 162px,#76ffce 179px,#b2ffd5 194px,#fffede 211px,#ffd7c2 220px,#ffb3a6 231px,#ff948f 243px,#ff797b 257px,#ff6169 273px,#ff4c59 291px,#ff394b 312px,#ff293f 336px,#ff122e 384px,#ff0021 443px,#ff0014 529px,#ff000b 639px)"></i>
<i style="background:linear-gradient(90deg,#00ff9f 7px,#00ffb1 82px,#00ffc5 144px,#35ffcd 161px,#72ffd5 178px,#aeffdd 193px,#fcffe8 210px,#fffde7 211px,#ffd6c9 220px,#ffb2ac 231px,#ff9395 243px,#ff7880 257px,#ff606d 273px,#ff4b5d 291px,#ff384e 312px,#ff2842 336px,#ff1231 383px,#ff0023 441px,#ff0016 527px,#ff000c 639px)"></i>
<i style="background:linear-gradient(90deg,#00ffa4 8px,#00ffb6 82px,#0fc 144px,#2effd3 159px,#6effdc 177px,#aaffe5 192px,#fdfff1 210px,#fffcef 211px,#ffd5d0 220px,#ffb1b3 231px,#ff929a 243px,#ff7784 257px,#ff5f71 273px,#ff4a60 291px,#ff3851 312px,#ff2744 336px,#ff1233 382px,#ff0025 439px,#ff0017 526px,#ff000d 639px)"></i>
<i style="background:linear-gradient(90deg,#00ffa9 8px,#00ffbc 83px,#01ffd4 145px,#37ffdc 162px,#71ffe5 178px,#b7fff0 195px,#fefffa 210px,#fffbf7 211px,#ffd4d7 220px,#ffb0b9 231px,#ff919f 243px,#ff7689 257px,#ff5e75 273px,#ff4964 291px,#ff3754 312px,#ff2747 336px,#ff1135 381px,#ff0027 437px,#ff0019 524px,#ff000e 638px)"></i>
<i style="background:linear-gradient(90deg,#00ffae 9px,#00ffc2 84px,#00ffdb 145px,#30ffe3 160px,#66ffeb 175px,#a2fff5 190px,#e1ffff 204px,#fef9ff 211px,#fff5fb 212px,#ffcfdb 221px,#ffacbc 232px,#ff8ea3 244px,#ff738c 258px,#ff5c78 274px,#ff4866 292px,#ff3557 313px,#ff2549 337px,#ff1137 381px,#ff0029 435px,#ff001a 522px,#ff000f 636px)"></i>
<i style="background:linear-gradient(90deg,#00ffb2 10px,#00ffc8 84px,#00ffe2 145px,#1bffe7 154px,#4bffef 168px,#79fff7 180px,#abffff 192px,#feefff 213px,#ffebfc 214px,#ffc7dc 223px,#ffa5be 234px,#ff87a3 247px,#ff6d8c 261px,#ff5778 277px,#ff4467 295px,#ff3258 316px,#ff234a 340px,#ff1039 382px,#ff002b 433px,#ff001c 520px,#ff0010 634px)"></i>
<i style="background:linear-gradient(90deg,#00ffb7 10px,#00ffce 85px,#01ffea 146px,#39fff4 163px,#78ffff 180px,#fee5ff 215px,#ffe1fc 216px,#ffbcda 226px,#ff9cbd 237px,#ff82a4 249px,#ff698e 263px,#ff547a 279px,#ff4068 298px,#ff3059 319px,#ff214b 343px,#ff0f3b 383px,#ff002d 431px,#ff001d 518px,#f01 632px)"></i>
<i style="background:linear-gradient(90deg,#00ffbc 11px,#00ffd4 85px,#00fff1 146px,#4affff 168px,#a3edff 193px,#fedbff 217px,#ffd8fc 218px,#ffb5da 228px,#ff96be 239px,#ff7ba4 252px,#ff648e 266px,#ff507b 282px,#ff3d69 301px,#ff1f4d 345px,#ff0e3d 383px,#ff002f 429px,#ff001f 516px,#ff0013 630px)"></i>
<i style="background:linear-gradient(90deg,#00ffc1 12px,#00ffdb 86px,#00fff9 146px,#1fffff 156px,#8ce9ff 188px,#fed2ff 219px,#ffcffc 220px,#ffaddb 230px,#ff91bf 241px,#ff76a5 254px,#ff6090 268px,#ff4c7c 284px,#ff3a6b 303px,#ff1d4e 348px,#ff0d3f 384px,#ff0032 427px,#ff0021 514px,#ff0014 628px)"></i>
<i style="background:linear-gradient(90deg,#00ffc6 12px,#00ffde 79px,#0ff 143px,#01fdff 147px,#6de7ff 180px,#fecaff 221px,#ffc6fc 222px,#ffa7dc 232px,#ff8bc0 243px,#ff72a7 256px,#ff5b90 271px,#ff487d 287px,#ff376b 306px,#ff1b4f 351px,#ff0c40 385px,#ff0034 425px,#f02 512px,#ff0015 626px)"></i>
<i style="background:linear-gradient(90deg,#0fc 13px,#00ffe3 77px,#0ff 131px,#00f5ff 147px,#6cdfff 181px,#fec1ff 223px,#ffbefc 224px,#ffa0dd 234px,#ff86c1 245px,#ff6da8 258px,#ff5891 273px,#ff457f 289px,#ff356d 308px,#ff1950 354px,#ff0036 423px,#ff0024 510px,#ff0016 624px)"></i>
<i style="background:linear-gradient(90deg,#00ffd1 14px,#00ffe6 70px,#0ff 119px,#0ef 147px,#66d9ff 180px,#feb9ff 225px,#ffb7fc 226px,#ff9add 236px,#ff7fc0 248px,#ff68a8 261px,#ff5493 275px,#ff427f 292px,#ff316e 311px,#ff1751 356px,#ff0039 421px,#ff0026 508px,#ff0017 622px)"></i>
<i style="background:linear-gradient(90deg,#00ffd6 15px,#00ffe9 64px,#0ff 107px,#01e7ff 148px,#6fd0ff 184px,#feb2ff 227px,#ffaffc 228px,#ff94de 238px,#ff7ac1 250px,#ff64a9 263px,#ff5093 278px,#ff3e7f 295px,#ff2f6e 314px,#ff1552 359px,#ff003b 419px,#ff0027 506px,#ff0018 620px)"></i>
<i style="background:linear-gradient(90deg,#00ffdb 15px,#0ff 95px,#00e0ff 148px,#6fc9ff 185px,#feaaff 229px,#ffa8fd 230px,#ff90e1 239px,#ff79c7 250px,#ff64af 262px,#ff529b 275px,#ff3478 306px,#ff1b5d 344px,#ff0d4c 378px,#ff003d 417px,#ff0029 504px,#ff001a 618px)"></i>
<i style="background:linear-gradient(90deg,#00ffe1 16px,#0ff 83px,#00daff 148px,#68c3ff 184px,#fea3ff 231px,#ffa1fd 232px,#ff8ae2 241px,#ff74c8 252px,#ff60b1 264px,#ff4f9c 277px,#ff317a 308px,#ff1a5e 346px,#ff0c4e 378px,#ff0040 415px,#ff002b 501px,#ff001b 616px)"></i>
<i style="background:linear-gradient(90deg,#00ffe7 17px,#0ff 71px,#01d3ff 149px,#71bbff 188px,#fe9dff 233px,#ff9bfd 234px,#ff85e2 243px,#ff6fc8 254px,#ff5cb2 266px,#ff4c9e 279px,#ff2f7b 310px,#ff185f 348px,#ff0b50 378px,#ff0043 413px,#ff002d 499px,#ff001c 614px)"></i>
<i style="background:linear-gradient(90deg,#00ffec 17px,#0ff 59px,#00ceff 149px,#71b5ff 189px,#fe96ff 235px,#ff94fd 236px,#ff7fe3 245px,#ff6bc9 256px,#ff59b3 268px,#ff499f 281px,#ff2d7d 312px,#ff1661 350px,#ff0045 411px,#ff002f 497px,#ff001d 612px)"></i>
<i style="background:linear-gradient(90deg,#00fff2 18px,#0ff 47px,#00c8ff 149px,#6bb0ff 188px,#fe90ff 237px,#ff8efd 238px,#ff7ae4 247px,#ff66ca 258px,#ff55b4 270px,#ff46a0 283px,#ff2b7e 314px,#ff1563 351px,#ff0048 409px,#ff0030 495px,#ff001f 610px)"></i>
<i style="background:linear-gradient(90deg,#00fff8 19px,#0ff 35px,#01c2ff 150px,#73a9ff 192px,#fe8aff 239px,#ff88fd 240px,#ff73e2 250px,#ff62cb 260px,#ff51b5 272px,#ff43a1 285px,#ff287f 316px,#ff1464 353px,#ff004a 408px,#ff0032 494px,#ff0020 609px)"></i>
<i style="background:linear-gradient(90deg,#00fffe 20px,#00e6ff 75px,#00bdff 150px,#73a4ff 193px,#ff83fd 242px,#ff6fe2 252px,#ff5ecc 262px,#ff4eb6 274px,#ff40a3 287px,#ff2681 318px,#ff1265 355px,#ff004d 406px,#ff0034 492px,#ff0021 607px)"></i>
<i style="background:linear-gradient(90deg,#00fbff 20px,#00b8ff 150px,#6da0ff 192px,#ff7dfd 244px,#ff6ae3 254px,#ff5acd 264px,#ff4bb7 276px,#ff3da4 289px,#ff2482 320px,#ff1167 357px,#ff004f 404px,#ff0036 490px,#ff0023 605px)"></i>
<i style="background:linear-gradient(90deg,#00f5ff 21px,#01b3ff 151px,#7299ff 195px,#ff78fd 246px,#ff66e3 256px,#ff56cd 266px,#ff3aa5 291px,#ff2384 321px,#ff0f68 358px,#ff0053 401px,#ff003f 457px,#ff0030 523px,#ff0024 603px)"></i>
<i style="background:linear-gradient(90deg,#00efff 22px,#00aeff 151px,#7294ff 196px,#ff73fd 248px,#ff61e3 258px,#ff53ce 268px,#ff37a6 293px,#ff2185 323px,#ff0e6a 360px,#ff0056 399px,#ff0041 458px,#ff0032 523px,#ff0025 601px)"></i>
<i style="background:linear-gradient(90deg,#00eaff 23px,#0af 151px,#6f90ff 196px,#ff6efd 250px,#ff5de4 260px,#ff4ecd 271px,#ff34a6 296px,#ff1e85 326px,#ff0c6b 362px,#ff0058 398px,#ff0042 458px,#f03 522px,#ff0027 599px)"></i>
<i style="background:linear-gradient(90deg,#00e5ff 24px,#01a5ff 152px,#748bff 199px,#ff69fd 252px,#ff59e4 262px,#ff4cd0 272px,#ff32a8 297px,#ff1d88 327px,#ff0b6d 363px,#ff005b 396px,#f04 458px,#ff0035 521px,#ff0028 597px)"></i>
<i style="background:linear-gradient(90deg,#00e0ff 24px,#00a1ff 152px,#7386ff 200px,#ff65fd 254px,#ff55e5 264px,#ff48d0 274px,#ff2fa9 299px,#ff1b89 329px,#ff0a6e 365px,#ff005e 394px,#ff0045 459px,#ff0036 521px,#ff0029 595px)"></i>
<i style="background:linear-gradient(90deg,#00dbff 25px,#009dff 152px,#7183ff 200px,#ff60fd 256px,#ff45d1 276px,#ff2daa 301px,#ff198a 331px,#ff0970 366px,#ff0061 392px,#ff0047 459px,#ff0038 520px,#ff002b 593px)"></i>
<i style="background:linear-gradient(90deg,#00d6ff 26px,#0199ff 153px,#757dff 203px,#ff5cfe 258px,#ff4ee6 268px,#ff40d0 279px,#ff2aab 303px,#ff178b 333px,#ff0771 368px,#ff0064 390px,#ff0048 460px,#ff0039 520px,#ff002c 591px)"></i>
<i style="background:linear-gradient(90deg,#00d1ff 27px,#0095ff 153px,#7579ff 204px,#ff58fe 260px,#ff4ae6 270px,#ff3dd0 281px,#ff28ac 305px,#ff168d 334px,#ff0672 369px,#ff0067 388px,#ff004a 460px,#ff003a 519px,#ff002e 589px)"></i>
<i style="background:linear-gradient(90deg,#00cdff 28px,#0092ff 153px,#7276ff 204px,#ff54fe 262px,#ff3ad1 283px,#ff26ad 307px,#ff148e 336px,#ff0574 370px,#ff006b 386px,#ff005a 420px,#ff004c 460px,#ff003c 518px,#ff002f 587px)"></i>
<i style="background:linear-gradient(90deg,#00c9ff 28px,#018eff 154px,#7771ff 207px,#ff50fe 264px,#ff37d2 285px,#ff23ae 309px,#ff128f 338px,#ff0475 372px,#ff006e 384px,#ff005f 413px,#ff004d 461px,#ff003d 518px,#ff0030 585px)"></i>
<i style="background:linear-gradient(90deg,#00c4ff 29px,#008aff 154px,#766eff 208px,#ff4cfe 266px,#ff34d2 287px,#ff21af 311px,#ff1191 339px,#ff0377 373px,#ff0071 382px,#ff0061 413px,#ff004f 461px,#ff003f 517px,#ff0032 583px)"></i>
<i style="background:linear-gradient(90deg,#00c0ff 30px,#0087ff 154px,#746bff 208px,#ff48fe 268px,#ff32d3 289px,#ff1fb0 313px,#ff0f92 341px,#ff0278 375px,#ff0063 414px,#ff0050 461px,#ff0041 516px,#f03 581px)"></i>
<i style="background:linear-gradient(90deg,#00bcff 31px,#0183ff 155px,#7866ff 211px,#ff45fe 270px,#ff30d5 290px,#ff1db2 314px,#ff0e94 342px,#ff017a 376px,#ff0064 415px,#ff0052 461px,#ff0042 515px,#ff0035 579px)"></i>
<i style="background:linear-gradient(90deg,#00b8ff 32px,#0080ff 155px,#7863ff 212px,#ff41fe 272px,#ff2dd6 292px,#ff1bb2 316px,#ff0c95 344px,#ff007b 377px,#f06 416px,#ff0053 461px,#f04 514px,#ff0036 577px)"></i>
<i style="background:linear-gradient(90deg,#00b4ff 33px,#007dff 155px,#7560ff 212px,#ff3efe 274px,#ff2ad6 294px,#ff19b3 318px,#ff0b96 346px,#ff007c 379px,#ff0067 417px,#f05 462px,#ff0045 514px,#ff0038 575px)"></i>
<i style="background:linear-gradient(90deg,#00b0ff 34px,#017aff 156px,#775dff 214px,#ff3bfe 276px,#ff28d7 296px,#ff17b4 320px,#ff0997 348px,#ff0083 372px,#ff007e 380px,#ff0069 418px,#ff0056 462px,#ff0047 513px,#ff0039 573px)"></i>
<i style="background:linear-gradient(90deg,#00adff 34px,#07f 156px,#775aff 215px,#ff37fe 278px,#ff25d7 298px,#ff15b5 322px,#ff0898 349px,#ff0087 370px,#ff0080 381px,#ff006b 418px,#ff0058 462px,#ff0048 513px,#ff003b 572px)"></i>
<i style="background:linear-gradient(90deg,#00a9ff 35px,#0074ff 156px,#7657ff 216px,#ff34fe 280px,#ff23d8 300px,#ff13b6 324px,#ff099f 345px,#ff008b 368px,#ff0081 383px,#ff006b 420px,#ff0059 463px,#ff004a 513px,#ff003c 570px)"></i>
<i style="background:linear-gradient(90deg,#00a6ff 36px,#0171ff 157px,#7853ff 218px,#ff31fe 282px,#ff20d8 302px,#ff12b8 325px,#ff09a3 344px,#ff008f 366px,#ff0082 384px,#ff006d 420px,#ff005b 462px,#ff004c 511px,#ff003e 568px)"></i>
<i style="background:linear-gradient(90deg,#00a2ff 37px,#006fff 157px,#7851ff 219px,#ff2efe 284px,#ff1ed9 304px,#ff10b8 327px,#ff0093 364px,#ff0084 385px,#ff006f 421px,#ff005d 462px,#ff004d 510px,#ff0040 566px)"></i>
<i style="background:linear-gradient(90deg,#009fff 38px,#006cff 157px,#774eff 220px,#ff2bfe 286px,#ff1cd9 306px,#ff0eb9 329px,#ff0098 362px,#ff0085 386px,#ff0071 421px,#ff005f 462px,#ff004f 509px,#ff0041 564px)"></i>
<i style="background:linear-gradient(90deg,#009cff 39px,#0169ff 158px,#794bff 222px,#ff29fe 288px,#ff1ad9 308px,#ff0cba 331px,#ff009c 360px,#ff0087 387px,#ff0072 422px,#ff0060 462px,#ff0051 508px,#ff0043 562px)"></i>
<i style="background:linear-gradient(90deg,#0098ff 40px,#0067ff 158px,#7948ff 223px,#ff26fe 290px,#ff17da 310px,#ff0bbc 332px,#ff00a0 358px,#ff0089 388px,#ff0074 422px,#ff0062 462px,#ff0052 508px,#ff0045 560px)"></i>
<i style="background:linear-gradient(90deg,#0095ff 41px,#0065ff 158px,#7946ff 224px,#ff23fe 292px,#ff15da 312px,#ff09bc 334px,#ff00a5 356px,#ff0089 390px,#ff0075 424px,#ff0063 463px,#ff0046 558px)"></i>
<i style="background:linear-gradient(90deg,#0092ff 42px,#0162ff 159px,#7a43ff 226px,#ff21fe 294px,#ff13db 314px,#ff08bd 336px,#ff00a9 354px,#ff008b 391px,#ff0076 425px,#ff0065 463px,#ff0048 556px)"></i>
<i style="background:linear-gradient(90deg,#008fff 43px,#0060ff 159px,#7a41ff 227px,#ff1efe 296px,#ff11db 316px,#ff06be 338px,#ff00ad 353px,#ff008d 392px,#ff0078 425px,#ff0067 462px,#ff004a 554px)"></i>
<i style="background:linear-gradient(90deg,#008cff 44px,#005dff 159px,#793eff 228px,#ff1cfe 298px,#ff10dd 317px,#ff05bf 339px,#ff00b2 351px,#ff008e 393px,#ff007a 425px,#ff0069 462px,#ff004c 552px)"></i>
<i style="background:linear-gradient(90deg,#008aff 44px,#005bff 159px,#763dff 227px,#ff19fe 300px,#ff0edd 319px,#ff03c0 341px,#ff00b7 349px,#ff00a6 366px,#ff0090 394px,#ff007c 426px,#ff006a 462px,#ff004d 550px)"></i>
<i style="background:linear-gradient(90deg,#0087ff 45px,#0059ff 160px,#7b39ff 231px,#ff17fe 302px,#ff0cde 321px,#ff01c1 343px,#ff00a8 367px,#ff0091 395px,#ff007e 426px,#ff006c 462px,#ff004f 548px)"></i>
<i style="background:linear-gradient(90deg,#0084ff 46px,#0057ff 160px,#7938ff 231px,#ff15fe 304px,#ff0ade 323px,#ff00c2 344px,#ff00a9 368px,#ff0093 396px,#ff007f 427px,#ff006e 462px,#ff0051 546px)"></i>
<i style="background:linear-gradient(90deg,#0082ff 47px,#05f 160px,#7736ff 231px,#ff12ff 306px,#ff08df 325px,#ff00c3 346px,#f0a 370px,#ff0094 397px,#ff0080 428px,#ff006f 462px,#ff0053 544px)"></i>
<i style="background:linear-gradient(90deg,#007fff 48px,#0053ff 161px,#7a33ff 234px,#ff10ff 308px,#ff06df 327px,#ff00cd 340px,#ff00c3 348px,#ff00ab 372px,#ff0096 398px,#ff0082 428px,#ff0071 462px,#f05 542px)"></i>
<i style="background:linear-gradient(90deg,#007cff 49px,#0051ff 161px,#7a31ff 235px,#ff0eff 310px,#ff00d3 338px,#ff00c5 349px,#ff00ac 373px,#ff0097 399px,#ff0084 428px,#ff0073 461px,#ff0057 540px)"></i>
<i style="background:linear-gradient(90deg,#007aff 50px,#004fff 161px,#7830ff 235px,#ff0cff 312px,#ff00d9 336px,#ff00c6 351px,#ff00ae 374px,#f09 400px,#ff0086 429px,#ff0075 461px,#ff0059 538px)"></i>
<i style="background:linear-gradient(90deg,#07f 51px,#014dff 162px,#7b2dff 238px,#ff0aff 314px,#f0d 335px,#ff00c7 352px,#ff00af 375px,#ff009b 400px,#f07 460px,#ff005a 536px)"></i>
<i style="background:linear-gradient(90deg,#0075ff 52px,#004bff 162px,#7a2bff 239px,#ff08ff 316px,#ff00e3 333px,#ff00c8 354px,#ff00b0 377px,#ff009b 402px,#ff0078 461px,#ff005c 535px)"></i>
<i style="background:linear-gradient(90deg,#0072ff 53px,#0049ff 162px,#782aff 239px,#ff06ff 318px,#ff00e9 331px,#ff00c8 356px,#ff00b2 378px,#ff009d 403px,#ff007a 461px,#ff005e 533px)"></i>
<i style="background:linear-gradient(90deg,#0070ff 54px,#0147ff 163px,#7b27ff 242px,#ff04ff 320px,#ff00f0 329px,#ff00ca 357px,#ff00b3 379px,#ff009f 403px,#ff007c 460px,#ff0060 531px)"></i>
<i style="background:linear-gradient(90deg,#006eff 55px,#0046ff 163px,#7b25ff 243px,#ff02ff 322px,#ff00e3 340px,#ff00ca 359px,#ff00b5 380px,#ff00a1 404px,#ff007e 460px,#ff0062 529px)"></i>
<i style="background:linear-gradient(90deg,#006cff 56px,#04f 163px,#7924ff 243px,#f0f 324px,#ff00e4 341px,#f0c 360px,#ff00b6 381px,#ff00a2 405px,#ff0080 460px,#ff0064 527px)"></i>
<i style="background:linear-gradient(90deg,#0069ff 58px,#0142ff 164px,#7c21ff 246px,#f0f 326px,#ff00e5 343px,#ff00cd 362px,#ff00b7 383px,#ff00a3 406px,#ff0082 460px,#f06 525px)"></i>
<i style="background:linear-gradient(90deg,#0067ff 59px,#0041ff 164px,#7c20ff 247px,#f300ff 321px,#f0f 328px,#ff00e5 345px,#ff00cd 364px,#ff00a5 407px,#ff0084 459px,#ff0068 523px)"></i>
<i style="background:linear-gradient(90deg,#0065ff 60px,#003fff 164px,#7a1fff 247px,#ed00ff 319px,#f0f 330px,#ff00e5 347px,#ff00cf 365px,#ff00a7 407px,#ff0086 459px,#ff006a 521px)"></i>
<i style="background:linear-gradient(90deg,#0063ff 61px,#013eff 165px,#7120ff 242px,#e600ff 317px,#f0f 332px,#ff00e7 348px,#ff00d0 366px,#ff00a8 408px,#f08 458px,#ff006d 519px)"></i>
<i style="background:linear-gradient(90deg,#0061ff 62px,#003cff 165px,#6e1fff 241px,#e000ff 315px,#f0f 334px,#ff00e7 350px,#ff00d0 368px,#f0a 409px,#ff008a 458px,#ff006f 517px)"></i>
<i style="background:linear-gradient(90deg,#005fff 63px,#003bff 165px,#691eff 239px,#da00ff 313px,#f0f 336px,#ff00e7 352px,#ff00d1 370px,#ff00ab 410px,#ff008b 458px,#ff0071 515px)"></i>
<i style="background:linear-gradient(90deg,#005dff 64px,#0139ff 166px,#691dff 240px,#d400ff 311px,#f0f 338px,#ff00d2 371px,#ff00ad 410px,#ff008e 457px,#ff0073 513px)"></i>
<i style="background:linear-gradient(90deg,#005bff 65px,#0038ff 166px,#661cff 239px,#ce00ff 309px,#f0f 340px,#ff00d4 372px,#ff00af 411px,#ff0090 457px,#ff0076 511px)"></i>
<i style="background:linear-gradient(90deg,#0059ff 66px,#0036ff 166px,#601cff 236px,#c900ff 307px,#f0f 342px,#ff00d4 374px,#ff00b0 412px,#ff0092 456px,#ff0078 509px)"></i>
<i style="background:linear-gradient(90deg,#0057ff 67px,#0135ff 167px,#601bff 237px,#c300ff 305px,#f0f 344px,#ff00d6 375px,#ff00b2 412px,#ff0094 456px,#ff007a 507px)"></i>
<i style="background:linear-gradient(90deg,#05f 68px,#0034ff 167px,#5d1aff 236px,#be00ff 303px,#f0f 346px,#ff00d6 377px,#ff00b4 413px,#ff0096 455px,#ff007d 505px)"></i>
<i style="background:linear-gradient(90deg,#0053ff 70px,#0032ff 167px,#591aff 234px,#b900ff 301px,#f0f 348px,#ff00d8 378px,#ff00b5 414px,#ff0098 455px,#ff007f 503px)"></i>
<i style="background:linear-gradient(90deg,#0051ff 71px,#0131ff 168px,#5819ff 234px,#b300ff 299px,#f0f 350px,#ff00d8 380px,#ff00b7 414px,#ff009a 454px,#ff0081 501px)"></i>
<i style="background:linear-gradient(90deg,#0050ff 72px,#0030ff 168px,#5518ff 233px,#ae00ff 297px,#f0f 352px,#ff00d9 381px,#ff00b8 415px,#ff009c 454px,#ff0084 500px)"></i>
<i style="background:linear-gradient(90deg,#004eff 73px,#002eff 168px,#5218ff 231px,#a900ff 295px,#f0f 354px,#ff00da 383px,#ff00ba 416px,#ff009e 454px,#ff0086 498px)"></i>
<i style="background:linear-gradient(90deg,#004cff 74px,#012dff 169px,#5217ff 232px,#a400ff 293px,#f0f 356px,#ff00db 384px,#ff00bc 416px,#ff00a1 453px,#ff0089 496px)"></i>
<i style="background:linear-gradient(90deg,#004aff 75px,#002cff 169px,#4f16ff 231px,#a000ff 291px,#f0f 358px,#ff00db 386px,#ff00bd 417px,#ff00a2 453px,#ff008b 494px)"></i>
<i style="background:linear-gradient(90deg,#0049ff 76px,#002bff 169px,#4b16ff 229px,#9b00ff 289px,#f0f 360px,#f0d 387px,#ff00bf 417px,#ff00a5 452px,#ff008e 492px)"></i>
<i style="background:linear-gradient(90deg,#0047ff 78px,#0129ff 170px,#9800ff 288px,#f0f 362px,#ff00de 388px,#ff00c1 418px,#ff00a7 452px,#ff0090 490px)"></i>
<i style="background:linear-gradient(90deg,#0045ff 79px,#0028ff 170px,#9300ff 286px,#f0f 364px,#ff00de 390px,#ff00c2 419px,#ff00a9 451px,#ff0093 488px)"></i>
<i style="background:linear-gradient(90deg,#04f 80px,#0027ff 170px,#8f00ff 284px,#f0f 366px,#ff00e0 391px,#ff00c4 419px,#ff00ab 451px,#ff0096 486px)"></i>
<i style="background:linear-gradient(90deg,#0042ff 81px,#0126ff 171px,#8b00ff 282px,#f0f 368px,#ff00e0 393px,#ff00c5 420px,#ff00ae 450px,#f09 484px)"></i>
<i style="background:linear-gradient(90deg,#0041ff 82px,#0025ff 171px,#8600ff 280px,#f0f 370px,#ff00e1 394px,#ff00c8 420px,#ff00b0 449px,#ff009b 482px)"></i>
<i style="background:linear-gradient(90deg,#003fff 84px,#0024ff 171px,#8200ff 278px,#f0f 372px,#ff00e3 395px,#ff00ca 420px,#ff00b3 448px,#ff009e 480px)"></i>
<i style="background:linear-gradient(90deg,#003eff 85px,#0123ff 172px,#7e00ff 276px,#f0f 374px,#ff00e3 397px,#ff00cb 421px,#ff00b5 448px,#ff00a1 478px)"></i>
<i style="background:linear-gradient(90deg,#003cff 86px,#02f 172px,#7a00ff 274px,#f0f 376px,#ff00e4 398px,#ff00cd 421px,#ff00b8 447px,#ff00a4 476px)"></i>
<i style="background:linear-gradient(90deg,#003bff 87px,#0021ff 172px,#7600ff 272px,#f0f 378px,#ff00e4 400px,#ff00ce 422px,#ff00a7 474px)"></i>
<i style="background:linear-gradient(90deg,#0039ff 88px,#0120ff 173px,#7200ff 270px,#f0f 380px,#ff00e6 401px,#ff00d1 422px,#f0a 472px)"></i>
<i style="background:linear-gradient(90deg,#0038ff 89px,#001fff 173px,#6f00ff 268px,#f0f 382px,#ff00d2 423px,#ff00ad 470px)"></i>
<i style="background:linear-gradient(90deg,#0036ff 91px,#001eff 173px,#6b00ff 266px,#f0f 384px,#ff00d4 423px,#ff00b0 468px)"></i>
<i style="background:linear-gradient(90deg,#0035ff 92px,#011dff 174px,#6700ff 264px,#f0f 386px,#ff00d6 423px,#ff00b3 466px)"></i>
<i style="background:linear-gradient(90deg,#0034ff 93px,#001cff 174px,#6400ff 262px,#f0f 388px,#ff00d7 424px,#ff00b7 464px)"></i>
<i style="background:linear-gradient(90deg,#03f 94px,#001bff 174px,#6000ff 260px,#af00ff 326px,#f0f 390px,#ff00da 424px,#ff00b9 463px)"></i>
<i style="background:linear-gradient(90deg,#0031ff 96px,#001aff 174px,#5d00ff 258px,#ad00ff 326px,#f0f 392px,#ff00db 425px,#ff00bd 461px)"></i>
<i style="background:linear-gradient(90deg,#0030ff 97px,#0019ff 175px,#5a00ff 256px,#ab00ff 326px,#f0f 394px,#f0d 425px,#ff00c0 459px)"></i>
<i style="background:linear-gradient(90deg,#002eff 98px,#0018ff 175px,#5600ff 254px,#a900ff 326px,#f0f 396px,#ff00df 425px,#ff00c3 457px)"></i>
<i style="background:linear-gradient(90deg,#002dff 99px,#0017ff 175px,#5300ff 252px,#a800ff 326px,#f0f 398px,#ff00e0 426px,#ff00c7 455px)"></i>
<i style="background:linear-gradient(90deg,#002cff 101px,#0016ff 176px,#5100ff 251px,#a700ff 327px,#f0f 400px,#ff00e3 426px,#ff00ca 453px)"></i>
<i style="background:linear-gradient(90deg,#002bff 102px,#0016ff 176px,#4e00ff 249px,#a500ff 327px,#f0f 402px,#ff00e5 426px,#ff00ce 451px)"></i>
<i style="background:linear-gradient(90deg,#0029ff 103px,#0015ff 176px,#4b00ff 247px,#a400ff 327px,#f0f 404px,#ff00d2 449px)"></i>
<i style="background:linear-gradient(90deg,#0028ff 104px,#0014ff 177px,#4800ff 245px,#a200ff 327px,#f0f 406px,#ff00d5 447px)"></i>
<i style="background:linear-gradient(90deg,#0027ff 106px,#0013ff 177px,#4500ff 243px,#a000ff 327px,#f0f 408px,#ff00d9 445px)"></i>
<i style="background:linear-gradient(90deg,#0026ff 107px,#0012ff 177px,#4200ff 241px,#9f00ff 327px,#f0f 410px,#f0d 443px)"></i>
<i style="background:linear-gradient(90deg,#0025ff 108px,#01f 178px,#3f00ff 239px,#9d00ff 327px,#f0f 412px,#ff00e1 441px)"></i>
<i style="background:linear-gradient(90deg,#0024ff 109px,#01f 178px,#3c00ff 237px,#9c00ff 327px,#f0f 414px,#ff00e5 439px)"></i>
<i style="background:linear-gradient(90deg,#02f 111px,#0110ff 179px,#3900ff 235px,#9a00ff 327px,#f0f 416px,#ff00e9 437px)"></i>
<i style="background:linear-gradient(90deg,#0021ff 112px,#000fff 179px,#3600ff 233px,#90f 327px,#fe00ff 418px,#ff00ed 435px)"></i>
<i style="background:linear-gradient(90deg,#0020ff 113px,#000eff 179px,#3400ff 231px,#9700ff 327px,#fe00ff 420px,#ff00f1 433px)"></i>
<i style="background:linear-gradient(90deg,#001fff 115px,#010eff 180px,#3100ff 229px,#9600ff 327px,#fe00ff 422px,#ff00f6 431px)"></i>
<i style="background:linear-gradient(90deg,#001eff 116px,#000dff 180px,#2e00ff 227px,#9400ff 327px,#fe00ff 424px,#ff00fa 429px)"></i>
<i style="background:linear-gradient(90deg,#001dff 117px,#000cff 180px,#2c00ff 225px,#9000ff 324px,#ff00fe 427px)"></i>
<i style="background:linear-gradient(90deg,#001cff 118px,#010bff 181px,#2900ff 223px,#9100ff 326px,#fc00ff 426px)"></i>
<i style="background:linear-gradient(90deg,#001bff 120px,#000bff 181px,#2700ff 221px,#8d00ff 324px,#f800ff 424px)"></i>
<i style="background:linear-gradient(90deg,#001aff 121px,#000aff 181px,#2400ff 219px,#8a00ff 322px,#f300ff 422px)"></i>
<i style="background:linear-gradient(90deg,#0019ff 123px,#0109ff 182px,#20f 217px,#8600ff 320px,#ef00ff 420px)"></i>
<i style="background:linear-gradient(90deg,#0018ff 124px,#0009ff 182px,#1f00ff 215px,#8300ff 318px,#eb00ff 418px)"></i>
<i style="background:linear-gradient(90deg,#0017ff 125px,#0008ff 182px,#1d00ff 213px,#8000ff 316px,#e700ff 416px)"></i>
<i style="background:linear-gradient(90deg,#0016ff 127px,#0008ff 182px,#1a00ff 211px,#7d00ff 314px,#e300ff 414px)"></i>
<i style="background:linear-gradient(90deg,#0015ff 128px,#0107ff 183px,#1900ff 210px,#7b00ff 313px,#df00ff 412px)"></i>
<i style="background:linear-gradient(90deg,#0014ff 129px,#0006ff 183px,#1700ff 208px,#7800ff 311px,#db00ff 410px)"></i>
<i style="background:linear-gradient(90deg,#0013ff 131px,#0006ff 183px,#1500ff 206px,#7500ff 309px,#d700ff 408px)"></i>
<i style="background:linear-gradient(90deg,#0012ff 132px,#0105ff 184px,#1200ff 204px,#7200ff 307px,#d300ff 406px)"></i>
<i style="background:linear-gradient(90deg,#01f 134px,#0004ff 184px,#1000ff 202px,#6f00ff 305px,#cf00ff 404px)"></i>
<i style="background:linear-gradient(90deg,#0010ff 135px,#0004ff 184px,#0e00ff 200px,#6c00ff 303px,#c0f 402px)"></i>
<i style="background:linear-gradient(90deg,#000fff 137px,#0103ff 185px,#0c00ff 198px,#6200ff 294px,#c800ff 400px)"></i>
<i style="background:linear-gradient(90deg,#000eff 138px,#0003ff 185px,#0a00ff 196px,#6000ff 293px,#c400ff 398px)"></i>
<i style="background:linear-gradient(90deg,#000dff 139px,#0002ff 185px,#5f00ff 292px,#c100ff 396px)"></i>
<i style="background:linear-gradient(90deg,#000cff 141px,#0101ff 186px,#5e00ff 292px,#bd00ff 394px)"></i>
<i style="background:linear-gradient(90deg,#000bff 142px,#0001ff 186px,#5c00ff 291px,#ba00ff 392px)"></i>
<i style="background:linear-gradient(90deg,#000aff 144px,#00f 186px,#5a00ff 290px,#b600ff 390px)"></i>
<i style="background:linear-gradient(90deg,#000aff 145px,#0100ff 187px,#5900ff 290px,#b400ff 389px)"></i>
<i style="background:linear-gradient(90deg,#0009ff 147px,#00f 187px,#5700ff 288px,#b100ff 387px)"></i>
<i style="background:linear-gradient(90deg,#0008ff 149px,#00f 187px,#50f 287px,#ad00ff 385px)"></i>
<i style="background:linear-gradient(90deg,#0007ff 150px,#0100ff 188px,#5400ff 287px,#a0f 383px)"></i>
<i style="background:linear-gradient(90deg,#0006ff 152px,#00f 188px,#5300ff 286px,#a700ff 381px)"></i>
<i style="background:linear-gradient(90deg,#0005ff 153px,#00f 188px,#5100ff 285px,#a400ff 379px)"></i>
<i style="background:linear-gradient(90deg,#0004ff 155px,#0100ff 189px,#4f00ff 284px,#a100ff 377px)"></i>
<i style="background:linear-gradient(90deg,#0004ff 156px,#00f 189px,#4e00ff 283px,#9e00ff 375px)"></i>
<i style="background:linear-gradient(90deg,#0003ff 158px,#00f 189px,#9b00ff 373px)"></i>
<i style="background:linear-gradient(90deg,#0002ff 160px,#0100ff 190px,#9800ff 371px)"></i>
<i style="background:linear-gradient(90deg,#0001ff 161px,#00f 190px,#9500ff 369px)"></i>
<i style="background:linear-gradient(90deg,#00f 163px,#00f 190px,#9200ff 367px)"></i>
<i style="background:linear-gradient(90deg,#00f 165px,#0100ff 191px,#8f00ff 365px)"></i>
<i style="background:linear-gradient(90deg,#00f 166px,#00f 191px,#8c00ff 363px)"></i>
<i style="background:linear-gradient(90deg,#00f 168px,#00f 191px,#8900ff 361px)"></i>
<i style="background:linear-gradient(90deg,#00f 170px,#0100ff 192px,#8700ff 359px)"></i>
<i style="background:linear-gradient(90deg,#00f 171px,#00f 192px,#8400ff 357px)"></i>
<i style="background:linear-gradient(90deg,#00f 173px,#00f 192px,#8100ff 355px)"></i>
<i style="background:linear-gradient(90deg,#00f 175px,#0100ff 193px,#7f00ff 353px)"></i>
<i style="background:linear-gradient(90deg,#00f 177px,#00f 193px,#7d00ff 352px)"></i>
<i style="background:linear-gradient(90deg,#00f 179px,#00f 193px,#7a00ff 350px)"></i>
<i style="background:linear-gradient(90deg,#00f 180px,#0100ff 194px,#7800ff 348px)"></i>
<i style="background:linear-gradient(90deg,#00f 182px,#00f 194px,#7500ff 346px)"></i>
<i style="background:linear-gradient(90deg,#00f 184px,#00f 194px,#7300ff 344px)"></i>
<i style="background:linear-gradient(90deg,#00f 186px,#0100ff 195px,#7000ff 342px)"></i>
<i style="background:linear-gradient(90deg,#00f 188px,#00f 195px,#6e00ff 340px)"></i>
<i style="background:linear-gradient(90deg,#00f 190px,#00f 195px,#0500ff 202px,#6b00ff 338px)"></i>
<i style="background:linear-gradient(90deg,#00f 192px,#1400ff 223px,#6900ff 336px)"></i>
<i style="background:linear-gradient(90deg,#00f 194px,#6700ff 334px)"></i>
<i style="background:linear-gradient(90deg,#00f 196px,#6400ff 332px)"></i>
<i style="background:linear-gradient(90deg,#0200ff 199px,#6200ff 330px)"></i>
<i style="background:linear-gradient(90deg,#0300ff 201px,#6000ff 328px)"></i>
<i style="background:linear-gradient(90deg,#0400ff 203px,#5e00ff 326px)"></i>
<i style="background:linear-gradient(90deg,#0600ff 205px,#5b00ff 324px)"></i>
<i style="background:linear-gradient(90deg,#0700ff 207px,#5900ff 322px)"></i>
<i style="background:linear-gradient(90deg,#0900ff 210px,#5700ff 320px)"></i>
<i style="background:linear-gradient(90deg,#0a00ff 212px,#50f 318px)"></i>
<i style="background:linear-gradient(90deg,#0b00ff 214px,#5400ff 317px)"></i>
<i style="background:linear-gradient(90deg,#0d00ff 217px,#5100ff 315px)"></i>
<i style="background:linear-gradient(90deg,#0e00ff 219px,#4f00ff 313px)"></i>
<i style="background:linear-gradient(90deg,#0f00ff 221px,#4d00ff 311px)"></i>
<i style="background:linear-gradient(90deg,#1000ff 224px,#4b00ff 309px)"></i>
<i style="background:linear-gradient(90deg,#1200ff 226px,#4900ff 307px)"></i>
<i style="background:linear-gradient(90deg,#1300ff 229px,#4700ff 305px)"></i>
<i style="background:linear-gradient(90deg,#1400ff 231px,#4500ff 303px)"></i>
<i style="background:linear-gradient(90deg,#1600ff 234px,#4300ff 301px)"></i>
<i style="background:linear-gradient(90deg,#1700ff 236px,#4100ff 299px)"></i>
<i style="background:linear-gradient(90deg,#1900ff 239px,#4000ff 297px)"></i>
<i style="background:linear-gradient(90deg,#1a00ff 241px,#3e00ff 295px)"></i>
<i style="background:linear-gradient(90deg,#1b00ff 243px,#3c00ff 293px)"></i>
<i style="background:linear-gradient(90deg,#1c00ff 246px,#3a00ff 291px)"></i>
<i style="background:linear-gradient(90deg,#1d00ff 248px,#3800ff 289px)"></i>
<i style="background:linear-gradient(90deg,#1e00ff 250px,#3600ff 287px)"></i>
<i style="background:linear-gradient(90deg,#2000ff 253px,#3500ff 285px)"></i>
<i style="background:linear-gradient(90deg,#2100ff 255px,#30f 283px)"></i>
<i style="background:linear-gradient(90deg,#20f 258px,#3100ff 281px)"></i>
<i style="background:linear-gradient(90deg,#2300ff 260px,#3000ff 280px)"></i>
<i style="background:linear-gradient(90deg,#2500ff 263px,#2e00ff 278px)"></i>
<i></i>
<i></i>
<i></i>
<i></i>
<i></i>
<i></i>
<i></i>
</div>
<svg style="left:970px;top:60px" width="687" height="560" viewBox="970 60 687 560">
<defs><clipPath id="pc"><rect x="1018" y="89" width="639" height="492"/></clipPath></defs>
<g clip-path="url(#pc)">
<path fill-rule="evenodd" fill="#262626" d="M1016 87H1697V583H1016ZM1291.0 567.2L1289.0 567.7L1286.8 567.4L1285.1 566.3L1283.3 565.1L1281.2 563.5L1279.6 562.2L1277.6 560.7L1275.4 558.8L1272.9 556.8L1270.3 554.5L1267.4 552.1L1265.8 550.8L1264.2 549.4L1262.5 548.0L1260.7 546.5L1258.8 545.0L1256.7 543.3L1254.6 541.5L1252.3 539.6L1250.0 537.7L1247.5 535.7L1245.0 533.7L1242.4 531.5L1239.7 529.3L1236.9 526.9L1234.0 524.4L1230.9 521.7L1227.6 518.8L1224.3 515.8L1220.8 512.7L1217.3 509.4L1213.7 505.9L1209.9 502.2L1206.0 498.3L1201.8 493.9L1197.3 489.0L1192.5 483.6L1187.5 477.7L1182.1 471.3L1176.6 464.4L1170.8 457.0L1164.8 449.2L1158.7 441.0L1152.4 432.2L1146.0 423.0L1139.5 413.3L1132.8 403.1L1126.0 392.5L1119.2 381.5L1112.4 370.3L1105.5 358.8L1098.6 347.2L1091.9 335.4L1085.2 323.6L1078.9 311.7L1072.8 299.9L1067.0 288.2L1061.6 276.6L1056.5 265.3L1051.7 254.2L1047.2 243.4L1043.1 232.9L1039.2 222.9L1035.8 213.4L1032.6 204.3L1029.9 195.7L1027.5 187.6L1025.4 180.1L1023.6 173.0L1022.1 166.4L1020.9 160.3L1020.0 154.6L1019.3 149.3L1018.9 144.4L1018.7 139.9L1018.7 135.6L1019.0 131.7L1019.5 128.0L1020.2 124.7L1021.1 121.5L1022.1 118.7L1023.4 116.1L1024.9 113.7L1026.6 111.5L1028.4 109.6L1030.3 107.9L1032.4 106.5L1034.6 105.2L1036.9 104.1L1039.3 103.2L1041.8 102.4L1044.4 101.8L1047.1 101.3L1049.9 100.9L1052.7 100.6L1055.6 100.4L1058.5 100.2L1061.5 100.1L1064.5 100.0L1067.5 99.9L1070.6 99.9L1073.6 99.9L1076.6 99.9L1079.7 100.0L1082.7 100.0L1085.8 100.1L1088.9 100.2L1092.0 100.3L1095.2 100.5L1098.4 100.6L1101.7 100.8L1105.0 101.0L1108.3 101.3L1111.7 101.5L1115.2 101.8L1118.8 102.1L1122.3 102.4L1126.0 102.7L1129.7 103.0L1133.5 103.4L1137.3 103.7L1141.3 104.1L1145.3 104.5L1149.3 104.9L1153.5 105.4L1157.8 105.8L1162.1 106.3L1166.5 106.7L1171.1 107.2L1175.7 107.7L1180.4 108.2L1185.2 108.8L1190.1 109.3L1195.1 109.9L1200.2 110.4L1205.4 111.0L1210.8 111.6L1216.2 112.2L1221.7 112.9L1227.4 113.5L1233.2 114.2L1239.0 114.8L1245.0 115.5L1251.1 116.2L1257.3 116.9L1263.6 117.6L1270.1 118.4L1276.6 119.1L1283.2 119.9L1290.0 120.7L1296.9 121.5L1303.8 122.3L1310.9 123.1L1318.1 123.9L1325.3 124.7L1332.7 125.6L1340.1 126.4L1347.6 127.3L1355.2 128.2L1362.9 129.0L1370.6 129.9L1378.4 130.8L1386.2 131.7L1394.0 132.6L1401.8 133.5L1409.6 134.4L1417.2 135.3L1424.8 136.2L1432.3 137.0L1439.8 137.9L1447.3 138.8L1454.8 139.6L1462.2 140.5L1469.6 141.3L1476.9 142.2L1484.0 143.0L1491.0 143.8L1497.8 144.6L1504.5 145.3L1511.0 146.1L1517.3 146.8L1523.5 147.5L1529.6 148.2L1535.5 148.9L1541.2 149.5L1546.8 150.2L1552.1 150.8L1557.3 151.4L1562.3 152.0L1567.1 152.5L1571.8 153.1L1576.3 153.6L1580.6 154.1L1584.8 154.5L1588.9 155.0L1592.8 155.4L1596.5 155.9L1600.2 156.3L1603.7 156.7L1607.1 157.1L1610.4 157.5L1613.7 157.9L1616.8 158.2L1619.9 158.6L1622.9 158.9L1625.8 159.3L1628.5 159.6L1631.2 159.9L1633.8 160.2L1636.3 160.5L1638.7 160.7L1641.0 161.0L1643.2 161.3L1645.3 161.5L1647.3 161.7L1651.0 162.1L1654.3 162.5L1657.3 162.9L1660.1 163.2L1662.5 163.5L1664.7 163.7L1667.6 164.0L1669.8 164.3L1672.0 164.6L1674.0 164.8L1676.4 165.1L1678.8 165.3L1680.9 165.6L1681.7 165.7Z"/>
<path fill-rule="evenodd" fill="#000" fill-opacity=".375" d="M1291.0 567.2L1289.0 567.7L1286.8 567.4L1285.1 566.3L1283.3 565.1L1281.2 563.5L1279.6 562.2L1277.6 560.7L1275.4 558.8L1272.9 556.8L1270.3 554.5L1267.4 552.1L1265.8 550.8L1264.2 549.4L1262.5 548.0L1260.7 546.5L1258.8 545.0L1256.7 543.3L1254.6 541.5L1252.3 539.6L1250.0 537.7L1247.5 535.7L1245.0 533.7L1242.4 531.5L1239.7 529.3L1236.9 526.9L1234.0 524.4L1230.9 521.7L1227.6 518.8L1224.3 515.8L1220.8 512.7L1217.3 509.4L1213.7 505.9L1209.9 502.2L1206.0 498.3L1201.8 493.9L1197.3 489.0L1192.5 483.6L1187.5 477.7L1182.1 471.3L1176.6 464.4L1170.8 457.0L1164.8 449.2L1158.7 441.0L1152.4 432.2L1146.0 423.0L1139.5 413.3L1132.8 403.1L1126.0 392.5L1119.2 381.5L1112.4 370.3L1105.5 358.8L1098.6 347.2L1091.9 335.4L1085.2 323.6L1078.9 311.7L1072.8 299.9L1067.0 288.2L1061.6 276.6L1056.5 265.3L1051.7 254.2L1047.2 243.4L1043.1 232.9L1039.2 222.9L1035.8 213.4L1032.6 204.3L1029.9 195.7L1027.5 187.6L1025.4 180.1L1023.6 173.0L1022.1 166.4L1020.9 160.3L1020.0 154.6L1019.3 149.3L1018.9 144.4L1018.7 139.9L1018.7 135.6L1019.0 131.7L1019.5 128.0L1020.2 124.7L1021.1 121.5L1022.1 118.7L1023.4 116.1L1024.9 113.7L1026.6 111.5L1028.4 109.6L1030.3 107.9L1032.4 106.5L1034.6 105.2L1036.9 104.1L1039.3 103.2L1041.8 102.4L1044.4 101.8L1047.1 101.3L1049.9 100.9L1052.7 100.6L1055.6 100.4L1058.5 100.2L1061.5 100.1L1064.5 100.0L1067.5 99.9L1070.6 99.9L1073.6 99.9L1076.6 99.9L1079.7 100.0L1082.7 100.0L1085.8 100.1L1088.9 100.2L1092.0 100.3L1095.2 100.5L1098.4 100.6L1101.7 100.8L1105.0 101.0L1108.3 101.3L1111.7 101.5L1115.2 101.8L1118.8 102.1L1122.3 102.4L1126.0 102.7L1129.7 103.0L1133.5 103.4L1137.3 103.7L1141.3 104.1L1145.3 104.5L1149.3 104.9L1153.5 105.4L1157.8 105.8L1162.1 106.3L1166.5 106.7L1171.1 107.2L1175.7 107.7L1180.4 108.2L1185.2 108.8L1190.1 109.3L1195.1 109.9L1200.2 110.4L1205.4 111.0L1210.8 111.6L1216.2 112.2L1221.7 112.9L1227.4 113.5L1233.2 114.2L1239.0 114.8L1245.0 115.5L1251.1 116.2L1257.3 116.9L1263.6 117.6L1270.1 118.4L1276.6 119.1L1283.2 119.9L1290.0 120.7L1296.9 121.5L1303.8 122.3L1310.9 123.1L1318.1 123.9L1325.3 124.7L1332.7 125.6L1340.1 126.4L1347.6 127.3L1355.2 128.2L1362.9 129.0L1370.6 129.9L1378.4 130.8L1386.2 131.7L1394.0 132.6L1401.8 133.5L1409.6 134.4L1417.2 135.3L1424.8 136.2L1432.3 137.0L1439.8 137.9L1447.3 138.8L1454.8 139.6L1462.2 140.5L1469.6 141.3L1476.9 142.2L1484.0 143.0L1491.0 143.8L1497.8 144.6L1504.5 145.3L1511.0 146.1L1517.3 146.8L1523.5 147.5L1529.6 148.2L1535.5 148.9L1541.2 149.5L1546.8 150.2L1552.1 150.8L1557.3 151.4L1562.3 152.0L1567.1 152.5L1571.8 153.1L1576.3 153.6L1580.6 154.1L1584.8 154.5L1588.9 155.0L1592.8 155.4L1596.5 155.9L1600.2 156.3L1603.7 156.7L1607.1 157.1L1610.4 157.5L1613.7 157.9L1616.8 158.2L1619.9 158.6L1622.9 158.9L1625.8 159.3L1628.5 159.6L1631.2 159.9L1633.8 160.2L1636.3 160.5L1638.7 160.7L1641.0 161.0L1643.2 161.3L1645.3 161.5L1647.3 161.7L1651.0 162.1L1654.3 162.5L1657.3 162.9L1660.1 163.2L1662.5 163.5L1664.7 163.7L1667.6 164.0L1669.8 164.3L1672.0 164.6L1674.0 164.8L1676.4 165.1L1678.8 165.3L1680.9 165.6L1681.7 165.7ZM1497.6 152.2L1150.5 119.8L1204.2 451.4Z"/>
</g>
<path d="M1017.7 88.5V580.6H1657M1017.7 88.6H1657M1656.3 88.6V580" fill="none" stroke="#b4b4b4" stroke-width="1.4"/>
<path d="M1017.4 581V587.5" stroke="#c4c4c4" stroke-width="1.4"/>
<text x="1017.1" y="602.3" font-size="14.5" fill="#d8d8d8" text-anchor="middle">0</text>
<path d="M1012.5 580.9H1017" stroke="#c4c4c4" stroke-width="1.4"/>
<text x="1011" y="586.1" font-size="14.5" fill="#d8d8d8" text-anchor="end">0</text>
<path d="M1070.7 581V587.5" stroke="#c4c4c4" stroke-width="1.4"/>
<text x="1070.4" y="602.3" font-size="14.5" fill="#d8d8d8" text-anchor="middle">0,05</text>
<path d="M1012.5 540.0H1017" stroke="#c4c4c4" stroke-width="1.4"/>
<text x="1011" y="545.2" font-size="14.5" fill="#d8d8d8" text-anchor="end">0,05</text>
<path d="M1124.0 581V587.5" stroke="#c4c4c4" stroke-width="1.4"/>
<text x="1123.7" y="602.3" font-size="14.5" fill="#d8d8d8" text-anchor="middle">0,1</text>
<path d="M1012.5 499.1H1017" stroke="#c4c4c4" stroke-width="1.4"/>
<text x="1011" y="504.3" font-size="14.5" fill="#d8d8d8" text-anchor="end">0,1</text>
<path d="M1177.3 581V587.5" stroke="#c4c4c4" stroke-width="1.4"/>
<text x="1177.0" y="602.3" font-size="14.5" fill="#d8d8d8" text-anchor="middle">0,15</text>
<path d="M1012.5 458.2H1017" stroke="#c4c4c4" stroke-width="1.4"/>
<text x="1011" y="463.4" font-size="14.5" fill="#d8d8d8" text-anchor="end">0,15</text>
<path d="M1230.6 581V587.5" stroke="#c4c4c4" stroke-width="1.4"/>
<text x="1230.3" y="602.3" font-size="14.5" fill="#d8d8d8" text-anchor="middle">0,2</text>
<path d="M1012.5 417.3H1017" stroke="#c4c4c4" stroke-width="1.4"/>
<text x="1011" y="422.5" font-size="14.5" fill="#d8d8d8" text-anchor="end">0,2</text>
<path d="M1283.9 581V587.5" stroke="#c4c4c4" stroke-width="1.4"/>
<text x="1283.6" y="602.3" font-size="14.5" fill="#d8d8d8" text-anchor="middle">0,25</text>
<path d="M1012.5 376.4H1017" stroke="#c4c4c4" stroke-width="1.4"/>
<text x="1011" y="381.6" font-size="14.5" fill="#d8d8d8" text-anchor="end">0,25</text>
<path d="M1337.2 581V587.5" stroke="#c4c4c4" stroke-width="1.4"/>
<text x="1336.9" y="602.3" font-size="14.5" fill="#d8d8d8" text-anchor="middle">0,3</text>
<path d="M1012.5 335.6H1017" stroke="#c4c4c4" stroke-width="1.4"/>
<text x="1011" y="340.8" font-size="14.5" fill="#d8d8d8" text-anchor="end">0,3</text>
<path d="M1390.5 581V587.5" stroke="#c4c4c4" stroke-width="1.4"/>
<text x="1390.2" y="602.3" font-size="14.5" fill="#d8d8d8" text-anchor="middle">0,35</text>
<path d="M1012.5 294.7H1017" stroke="#c4c4c4" stroke-width="1.4"/>
<text x="1011" y="299.9" font-size="14.5" fill="#d8d8d8" text-anchor="end">0,35</text>
<path d="M1443.8 581V587.5" stroke="#c4c4c4" stroke-width="1.4"/>
<text x="1443.5" y="602.3" font-size="14.5" fill="#d8d8d8" text-anchor="middle">0,4</text>
<path d="M1012.5 253.8H1017" stroke="#c4c4c4" stroke-width="1.4"/>
<text x="1011" y="259.0" font-size="14.5" fill="#d8d8d8" text-anchor="end">0,4</text>
<path d="M1497.1 581V587.5" stroke="#c4c4c4" stroke-width="1.4"/>
<text x="1496.8" y="602.3" font-size="14.5" fill="#d8d8d8" text-anchor="middle">0,45</text>
<path d="M1012.5 212.9H1017" stroke="#c4c4c4" stroke-width="1.4"/>
<text x="1011" y="218.1" font-size="14.5" fill="#d8d8d8" text-anchor="end">0,45</text>
<path d="M1550.4 581V587.5" stroke="#c4c4c4" stroke-width="1.4"/>
<text x="1550.1" y="602.3" font-size="14.5" fill="#d8d8d8" text-anchor="middle">0,5</text>
<path d="M1012.5 172.0H1017" stroke="#c4c4c4" stroke-width="1.4"/>
<text x="1011" y="177.2" font-size="14.5" fill="#d8d8d8" text-anchor="end">0,5</text>
<path d="M1603.7 581V587.5" stroke="#c4c4c4" stroke-width="1.4"/>
<text x="1603.4" y="602.3" font-size="14.5" fill="#d8d8d8" text-anchor="middle">0,55</text>
<path d="M1012.5 131.1H1017" stroke="#c4c4c4" stroke-width="1.4"/>
<text x="1011" y="136.3" font-size="14.5" fill="#d8d8d8" text-anchor="end">0,55</text>
<text x="1321" y="83.2" font-size="14.5" fill="#d4d4d4" text-anchor="middle">CIE 1976 u'v'</text>
<g fill="none" stroke="#fff" stroke-opacity=".88" stroke-width="1.6">
<rect x="1143.8" y="111.8" width="13.4" height="13.4"/>
<rect x="1228.0" y="119.5" width="13.4" height="13.4"/>
<rect x="1255.0" y="123.5" width="13.4" height="13.4"/>
<rect x="1207.8" y="127.3" width="13.4" height="13.4"/>
<rect x="1286.8" y="130.8" width="13.4" height="13.4"/>
<rect x="1167.5" y="135.8" width="13.4" height="13.4"/>
<rect x="1329.8" y="134.6" width="13.4" height="13.4"/>
<rect x="1204.8" y="149.6" width="13.4" height="13.4"/>
<rect x="1269.8" y="163.6" width="13.4" height="13.4"/>
<rect x="1258.8" y="169.3" width="13.4" height="13.4"/>
<rect x="1348.8" y="177.1" width="13.4" height="13.4"/>
<rect x="1174.8" y="180.6" width="13.4" height="13.4"/>
<rect x="1158.8" y="200.1" width="13.4" height="13.4"/>
<rect x="1316.3" y="222.8" width="13.4" height="13.4"/>
<rect x="1163.8" y="231.8" width="13.4" height="13.4"/>
<rect x="1197.5" y="228.6" width="13.4" height="13.4"/>
<rect x="1218.0" y="233.3" width="13.4" height="13.4"/>
<rect x="1253.8" y="251.8" width="13.4" height="13.4"/>
<rect x="1200.8" y="281.8" width="13.4" height="13.4"/>
<rect x="1335.8" y="301.8" width="13.4" height="13.4"/>
<rect x="1200.8" y="331.8" width="13.4" height="13.4"/>
<rect x="1197.8" y="443.8" width="13.4" height="13.4"/>
<rect x="1490.8" y="144.6" width="13.4" height="13.4"/>
<rect x="1409.8" y="165.1" width="13.4" height="13.4"/>
</g>
<rect x="1221.2" y="188.9" width="12.8" height="12.8" fill="#fff" fill-opacity=".55" stroke="#000" stroke-width="2.2"/>
<g stroke="#000" stroke-width="1.15">
<circle cx="1184.2" cy="130.8" r="4.3" fill="#18e818"/>
<circle cx="1242.5" cy="136.2" r="4.3" fill="#ffff00"/>
<circle cx="1226.5" cy="144.0" r="4.3" fill="#98a83c"/>
<circle cx="1262.0" cy="139.2" r="4.3" fill="#e4c024"/>
<circle cx="1281.0" cy="144.0" r="4.3" fill="#d8a030"/>
<circle cx="1311.2" cy="145.2" r="4.3" fill="#d47c2c"/>
<circle cx="1198.0" cy="153.2" r="4.3" fill="#3c8c40"/>
<circle cx="1222.8" cy="164.8" r="4.3" fill="#566838"/>
<circle cx="1378.5" cy="173.0" r="4.3" fill="#a83838"/>
<circle cx="1271.5" cy="178.2" r="4.3" fill="#6c4c3c"/>
<circle cx="1259.0" cy="188.0" r="4.3" fill="#c09484"/>
<circle cx="1321.5" cy="192.2" r="4.3" fill="#c45468"/>
<circle cx="1202.2" cy="201.5" r="4.3" fill="#60a898"/>
<circle cx="1237.2" cy="208.0" r="4.3" fill="#1c1c1c"/>
<circle cx="1236.0" cy="208.0" r="4.3" fill="#505050"/>
<circle cx="1234.8" cy="208.0" r="4.3" fill="#787878"/>
<circle cx="1233.6" cy="208.0" r="4.3" fill="#909090"/>
<circle cx="1232.2" cy="208.0" r="4.3" fill="#a8a49c"/>
<circle cx="1191.0" cy="220.8" r="4.3" fill="#00ffff"/>
<circle cx="1296.0" cy="242.0" r="4.3" fill="#b45494"/>
<circle cx="1191.0" cy="249.0" r="4.3" fill="#0c8ca4"/>
<circle cx="1213.8" cy="247.5" r="4.3" fill="#6484a8"/>
<circle cx="1226.4" cy="247.6" r="4.3" fill="#000"/>
<circle cx="1227.5" cy="250.5" r="4.3" fill="#8c8cb4"/>
<circle cx="1253.5" cy="279.0" r="4.3" fill="#58386c"/>
<circle cx="1213.0" cy="299.5" r="4.3" fill="#5064a8"/>
<circle cx="1306.5" cy="313.0" r="4.3" fill="#ff00ff"/>
<circle cx="1210.0" cy="355.0" r="4.3" fill="#34409c"/>
<circle cx="1215.8" cy="472.0" r="4.3" fill="#0808f8"/>
<circle cx="1433.5" cy="147.0" r="4.3" fill="#ff0000"/>
</g>
<defs><linearGradient id="ig" gradientUnits="userSpaceOnUse" x1="1458" y1="425" x2="1608" y2="553"><stop offset="0" stop-color="#8cff00"/><stop offset=".2" stop-color="#b0ff04"/><stop offset=".36" stop-color="#d8ff10"/><stop offset=".518" stop-color="#ffff28"/><stop offset=".62" stop-color="#fff000"/><stop offset=".8" stop-color="#ffc400"/><stop offset="1" stop-color="#ffa000"/></linearGradient><clipPath id="ic"><rect x="1454" y="409" width="197" height="129.5"/></clipPath></defs>
<rect x="1453.5" y="408.5" width="198" height="130.5" fill="url(#ig)" stroke="#8c8c8c" stroke-width="1.4"/>
<g clip-path="url(#ic)"><path d="M1450 420.2L1655 526.1V400H1450Z" fill="#000" fill-opacity=".4"/><path d="M1640 409H1652V419Z" fill="#111"/></g>
<g fill="none" stroke="#fff" stroke-opacity=".9" stroke-width="1.5"><rect x="1545" y="465.8" width="13.4" height="13.4"/><rect x="1613" y="517.8" width="13.4" height="13.4"/></g>
<circle cx="1536.5" cy="530" r="4.2" fill="#ffff00" stroke="#000" stroke-width="1.4"/>
<rect x="1402.3" y="548.8" width="252" height="26.8" fill="#333"/>
<text y="570" font-size="19.5" fill="#f4f4f4"><tspan x="1403" textLength="38" lengthAdjust="spacingAndGlyphs">RGB</tspan> <tspan x="1446.8" textLength="167.4" lengthAdjust="spacingAndGlyphs">Triplet: 255, 255, 0</tspan></text>
</svg>
<div class="abs" style="left:320px;top:629.8px;width:1345px;height:225.6px;background:#000"></div>
<div class="abs" style="left:322.2px;top:631px;width:1340px;height:28px;background:linear-gradient(#282828 0,#313131 50%,#1b1b1b 54%,#0c0c0c 100%)"></div>
<div class="abs" style="left:322.2px;top:658.8px;width:1340px;height:26px;background:#444"></div>
<div class="abs" style="left:322.2px;top:684.6px;width:1340px;height:26px;background:#818181"></div>
<div class="abs" style="left:322.2px;top:710.5px;width:1340px;height:26px;background:#444"></div>
<div class="abs" style="left:322.2px;top:736.3px;width:1340px;height:26px;background:#818181"></div>
<div class="abs" style="left:322.2px;top:762.2px;width:1340px;height:26px;background:#444"></div>
<div class="abs" style="left:322.2px;top:788.0px;width:1340px;height:26px;background:#818181"></div>
<div class="abs" style="left:322.2px;top:813.9px;width:1340px;height:26px;background:#444"></div>
<div class="abs" style="left:322.2px;top:839.7px;width:1340px;height:15px;background:#5c5c5c"></div>
<div class="abs" style="left:343px;top:841.5px;width:592px;height:12px;border-radius:6px;background:#444"></div>
<div class="abs" style="left:322.5px;top:840.5px;width:17px;height:13.5px;border-radius:3px;background:#8a8a8a"></div><div class="abs" style="left:327px;top:843px;border-top:4.5px solid transparent;border-bottom:4.5px solid transparent;border-right:7px solid #2e2e2e"></div>
<div class="abs" style="left:1650px;top:840.5px;width:17px;height:13.5px;border-radius:3px;background:#8a8a8a"></div><div class="abs" style="left:1652.5px;top:843px;border-top:4.5px solid transparent;border-bottom:4.5px solid transparent;border-left:7px solid #2e2e2e"></div>
<div class="abs" style="left:0;top:0;width:1657px;height:941px;overflow:hidden;pointer-events:none"><div id="tbl" class="abs" style="left:321px;top:630px;width:1100px;height:210px;transform:scaleX(1.320);transform-origin:0 0;font-size:14.4px;color:#f4f4f4">
<span class="t" style="left:75.7px;top:9.2px;width:160px;text-align:center;font-size:13.3px">White</span>
<span class="t" style="left:142.4px;top:9.2px;width:160px;text-align:center;font-size:13.3px">Gray 80</span>
<span class="t" style="left:209.0px;top:9.2px;width:160px;text-align:center;font-size:13.3px">Gray 65</span>
<span class="t" style="left:275.7px;top:9.2px;width:160px;text-align:center;font-size:13.3px">Gray 50</span>
<span class="t" style="left:342.3px;top:9.2px;width:160px;text-align:center;font-size:13.3px">Gray 35</span>
<span class="t" style="left:401.3px;top:9.2px;width:160px;text-align:center;font-size:13.3px">Black</span>
<span class="t" style="left:458.2px;top:9.2px;width:160px;text-align:center;font-size:13.3px">Dark Skin</span>
<span class="t" style="left:523.6px;top:9.2px;width:160px;text-align:center;font-size:13.3px">Light Skin</span>
<span class="t" style="left:586.5px;top:9.2px;width:160px;text-align:center;font-size:13.3px">Blue Sky</span>
<span class="t" style="left:645.2px;top:9.2px;width:160px;text-align:center;font-size:13.3px">Foliage</span>
<span class="t" style="left:713.6px;top:9.2px;width:160px;text-align:center;font-size:13.3px">Blue Flower</span>
<span class="t" style="left:795.1px;top:9.2px;width:160px;text-align:center;font-size:13.3px">Bluish Green</span>
<span class="t" style="left:866.4px;top:9.2px;width:160px;text-align:center;font-size:13.3px">Orange</span>
<span class="t" style="left:979.5px;top:9.2px;font-size:13.3px">Purplish Blue</span>
<span class="t" style="left:11.4px;top:36.0px;font-weight:bold;font-size:13.9px">x: CIE31</span>
<span class="t" style="left:125.8px;top:35.7px">0,3085</span>
<span class="t" style="left:192.4px;top:35.7px">0,3077</span>
<span class="t" style="left:259.5px;top:35.7px">0,3064</span>
<span class="t" style="left:326.3px;top:35.7px">0,3053</span>
<span class="t" style="left:392.8px;top:35.7px">0,3042</span>
<span class="t" style="left:459.5px;top:35.7px">0,2630</span>
<span class="t" style="left:510.6px;top:35.7px">0,3826</span>
<span class="t" style="left:574.6px;top:35.7px">0,3567</span>
<span class="t" style="left:641.3px;top:35.7px">0,2503</span>
<span class="t" style="left:699.6px;top:35.7px">0,3433</span>
<span class="t" style="left:758.5px;top:35.7px">0,2626</span>
<span class="t" style="left:837.1px;top:35.7px">0,2752</span>
<span class="t" style="left:920.8px;top:35.7px">0,4777</span>
<span class="t" style="left:979.3px;top:35.7px">0,2160</span>
<span class="t" style="left:11.4px;top:61.9px;font-weight:bold;font-size:13.9px">y: CIE31</span>
<span class="t" style="left:125.8px;top:61.6px">0,3045</span>
<span class="t" style="left:192.4px;top:61.6px">0,3041</span>
<span class="t" style="left:259.5px;top:61.6px">0,3042</span>
<span class="t" style="left:326.3px;top:61.6px">0,3040</span>
<span class="t" style="left:392.8px;top:61.6px">0,3042</span>
<span class="t" style="left:459.5px;top:61.6px">0,2409</span>
<span class="t" style="left:510.6px;top:61.6px">0,3500</span>
<span class="t" style="left:574.6px;top:61.6px">0,3352</span>
<span class="t" style="left:641.3px;top:61.6px">0,2454</span>
<span class="t" style="left:699.6px;top:61.6px">0,4024</span>
<span class="t" style="left:758.5px;top:61.6px">0,2375</span>
<span class="t" style="left:837.1px;top:61.6px">0,3253</span>
<span class="t" style="left:920.8px;top:61.6px">0,4076</span>
<span class="t" style="left:979.3px;top:61.6px">0,1790</span>
<span class="t" style="left:11.4px;top:87.8px;font-weight:bold;font-size:13.9px">Y</span>
<span class="t" style="left:125.8px;top:87.5px">300,9157</span>
<span class="t" style="left:192.4px;top:87.5px">239,8550</span>
<span class="t" style="left:259.5px;top:87.5px">197,4383</span>
<span class="t" style="left:326.3px;top:87.5px">155,8650</span>
<span class="t" style="left:392.8px;top:87.5px">111,7373</span>
<span class="t" style="left:459.5px;top:87.5px">0,3859</span>
<span class="t" style="left:510.6px;top:87.5px">32,5173</span>
<span class="t" style="left:574.6px;top:87.5px">112,5748</span>
<span class="t" style="left:641.3px;top:87.5px">63,9863</span>
<span class="t" style="left:699.6px;top:87.5px">44,1563</span>
<span class="t" style="left:758.5px;top:87.5px">78,6744</span>
<span class="t" style="left:837.1px;top:87.5px">136,5594</span>
<span class="t" style="left:920.8px;top:87.5px">88,4322</span>
<span class="t" style="left:979.3px;top:87.5px">40,4210</span>
<span class="t" style="left:11.4px;top:113.7px;font-weight:bold;font-size:13.9px">Target x:CIE31</span>
<span class="t" style="left:125.8px;top:113.4px">0,3127</span>
<span class="t" style="left:192.4px;top:113.4px">0,3127</span>
<span class="t" style="left:259.5px;top:113.4px">0,3127</span>
<span class="t" style="left:326.3px;top:113.4px">0,3127</span>
<span class="t" style="left:392.8px;top:113.4px">0,3127</span>
<span class="t" style="left:459.5px;top:113.4px">0,3127</span>
<span class="t" style="left:510.6px;top:113.4px">0,4003</span>
<span class="t" style="left:574.6px;top:113.4px">0,3795</span>
<span class="t" style="left:641.3px;top:113.4px">0,2496</span>
<span class="t" style="left:699.6px;top:113.4px">0,3395</span>
<span class="t" style="left:758.5px;top:113.4px">0,2681</span>
<span class="t" style="left:837.1px;top:113.4px">0,2626</span>
<span class="t" style="left:920.8px;top:113.4px">0,5122</span>
<span class="t" style="left:979.3px;top:113.4px">0,2160</span>
<span class="t" style="left:11.4px;top:139.6px;font-weight:bold;font-size:13.9px">Target y:CIE31</span>
<span class="t" style="left:125.8px;top:139.3px">0,3290</span>
<span class="t" style="left:192.4px;top:139.3px">0,3290</span>
<span class="t" style="left:259.5px;top:139.3px">0,3290</span>
<span class="t" style="left:326.3px;top:139.3px">0,3290</span>
<span class="t" style="left:392.8px;top:139.3px">0,3290</span>
<span class="t" style="left:459.5px;top:139.3px">0,3290</span>
<span class="t" style="left:510.6px;top:139.3px">0,3642</span>
<span class="t" style="left:574.6px;top:139.3px">0,3562</span>
<span class="t" style="left:641.3px;top:139.3px">0,2656</span>
<span class="t" style="left:699.6px;top:139.3px">0,4271</span>
<span class="t" style="left:758.5px;top:139.3px">0,2525</span>
<span class="t" style="left:837.1px;top:139.3px">0,3616</span>
<span class="t" style="left:920.8px;top:139.3px">0,4063</span>
<span class="t" style="left:979.3px;top:139.3px">0,1920</span>
<span class="t" style="left:11.4px;top:165.5px;font-weight:bold;font-size:13.9px">Target Y</span>
<span class="t" style="left:125.8px;top:165.2px">300,9157</span>
<span class="t" style="left:192.4px;top:165.2px">238,1140</span>
<span class="t" style="left:259.5px;top:165.2px">191,8629</span>
<span class="t" style="left:326.3px;top:165.2px">147,7559</span>
<span class="t" style="left:392.8px;top:165.2px">102,8874</span>
<span class="t" style="left:459.5px;top:165.2px">0,0000</span>
<span class="t" style="left:510.6px;top:165.2px">30,3122</span>
<span class="t" style="left:574.6px;top:165.2px">105,0050</span>
<span class="t" style="left:641.3px;top:165.2px">56,2664</span>
<span class="t" style="left:699.6px;top:165.2px">39,2167</span>
<span class="t" style="left:758.5px;top:165.2px">70,1690</span>
<span class="t" style="left:837.1px;top:165.2px">126,0025</span>
<span class="t" style="left:920.8px;top:165.2px">85,3031</span>
<span class="t" style="left:979.3px;top:165.2px">35,3610</span>
<span class="t" style="left:11.4px;top:191.4px;font-weight:bold;font-size:13.9px">ΔE 2000</span>
<span class="t" style="left:125.8px;top:191.1px">13,4174</span>
<span class="t" style="left:192.4px;top:191.1px">12,6948</span>
<span class="t" style="left:259.5px;top:191.1px">11,7437</span>
<span class="t" style="left:326.3px;top:191.1px">10,9593</span>
<span class="t" style="left:392.8px;top:191.1px">9,8430</span>
<span class="t" style="left:459.5px;top:191.1px">2,1126</span>
<span class="t" style="left:510.6px;top:191.1px">3,1624</span>
<span class="t" style="left:574.6px;top:191.1px">6,6755</span>
<span class="t" style="left:641.3px;top:191.1px">6,1979</span>
<span class="t" style="left:699.6px;top:191.1px">4,4234</span>
<span class="t" style="left:758.5px;top:191.1px">3,9382</span>
<span class="t" style="left:837.1px;top:191.1px">11,6840</span>
<span class="t" style="left:920.8px;top:191.1px">3,8776</span>
<span class="t" style="left:979.3px;top:191.1px">3,5380</span>
</div></div>
<div class="abs" style="left:0;top:860px;width:1657px;height:81px;overflow:hidden">
<div class="cb" style="left:-33.3px"><div class="chip" style="height:15px;background:#8c84c4"></div><div class="lb" style="top:28.8px"><span>Blue<br>Flower</span></div></div>
<div class="cb" style="left:31.7px"><div class="chip" style="height:15px;background:#64c4ac"></div><div class="lb" style="top:28.8px"><span>Bluish<br>Green</span></div></div>
<div class="cb" style="left:96.7px"><div class="chip" style="height:30px;background:#dc7828"></div><div class="lb" style="top:43.8px"><span>Orange</span></div></div>
<div class="cb" style="left:161.7px"><div class="chip" style="height:15px;background:#4858ac"></div><div class="lb" style="top:28.8px"><span>Purplish<br>Blue</span></div></div>
<div class="cb" style="left:226.7px"><div class="chip" style="height:15px;background:#cc5060"></div><div class="lb" style="top:28.8px"><span>Moderate<br>Red</span></div></div>
<div class="cb" style="left:291.7px"><div class="chip" style="height:30px;background:#5c386c"></div><div class="lb" style="top:43.8px"><span>Purple</span></div></div>
<div class="cb" style="left:356.7px"><div class="chip" style="height:15px;background:#a4c444"></div><div class="lb" style="top:28.8px"><span>Yellow<br>Green</span></div></div>
<div class="cb" style="left:421.7px"><div class="chip" style="height:15px;background:#eca42c"></div><div class="lb" style="top:28.8px"><span>Orange<br>Yellow</span></div></div>
<div class="cb" style="left:486.7px"><div class="chip" style="height:30px;background:#2c349c"></div><div class="lb" style="top:43.8px"><span>Blue</span></div></div>
<div class="cb" style="left:551.7px"><div class="chip" style="height:30px;background:#449c4c"></div><div class="lb" style="top:43.8px"><span>Green</span></div></div>
<div class="cb" style="left:616.7px"><div class="chip" style="height:30px;background:#b42c34"></div><div class="lb" style="top:43.8px"><span>Red</span></div></div>
<div class="cb" style="left:681.7px"><div class="chip" style="height:30px;background:#eccc20"></div><div class="lb" style="top:43.8px"><span>Yellow</span></div></div>
<div class="cb" style="left:746.7px"><div class="chip" style="height:30px;background:#c0549c"></div><div class="lb" style="top:43.8px"><span>Magenta</span></div></div>
<div class="cb" style="left:811.7px"><div class="chip" style="height:30px;background:#0890b0"></div><div class="lb" style="top:43.8px"><span>Cyan</span></div></div>
<div class="cb" style="left:876.7px"><div class="chip" style="height:30px;background:#ff0000"></div><div class="lb" style="top:43.8px"><span>100% Red</span></div></div>
<div class="cb" style="left:941.7px"><div class="chip" style="height:15px;background:#00ff00"></div><div class="lb" style="top:28.8px"><span>100%<br>Green</span></div></div>
<div class="cb" style="left:1006.7px"><div class="chip" style="height:15px;background:#0000ff"></div><div class="lb" style="top:28.8px"><span>100%<br>Blue</span></div></div>
<div class="cb" style="left:1071.7px"><div class="chip" style="height:15px;background:#00ffff"></div><div class="lb" style="top:28.8px"><span>100%<br>Cyan</span></div></div>
<div class="cb" style="left:1136.7px"><div class="chip" style="height:15px;background:#ff00ff"></div><div class="lb" style="top:28.8px"><span>100%<br>Magenta</span></div></div>
<div class="cb sel" style="left:1201.7px"><div class="chip" style="height:15px;background:#ffff00"></div><div class="lb" style="top:28.8px"><span>100%<br>Yellow</span></div></div>
<div class="abs" style="left:0;top:70px;width:1264px;height:11px;background:#5c5c5c"></div>
<div class="abs" style="left:450px;top:71.5px;width:797px;height:12px;border-radius:6px;background:#454545"></div>
<div class="abs" style="left:0;top:70.5px;width:13px;height:12px;border-radius:3px;background:#8a8a8a"></div><div class="abs" style="left:3px;top:72px;border-top:4.5px solid transparent;border-bottom:4.5px solid transparent;border-right:7px solid #2e2e2e"></div>
<div class="abs" style="left:1251px;top:70.5px;width:13px;height:12px;border-radius:3px;background:#8a8a8a"></div><div class="abs" style="left:1255px;top:72px;border-top:4.5px solid transparent;border-bottom:4.5px solid transparent;border-left:7px solid #2e2e2e"></div>
<div class="abs" style="left:1265.5px;top:8.5px;width:59.5px;height:22.5px;border-radius:6px 6px 0 0;background:linear-gradient(#a4a4a4,#8c8c8c 45%,#646464 100%)"></div>
<div class="abs" style="left:1283px;top:9.5px;width:23px;height:19px;border-radius:10px;background:linear-gradient(#8a8a8a,#b0b0b0)"></div><div class="abs" style="left:1288.5px;top:14px;border-left:6px solid transparent;border-right:6px solid transparent;border-bottom:7px solid #3a3a3a"></div>
<div class="abs" style="left:1265.5px;top:32.5px;width:59.5px;height:50px;background:linear-gradient(#9a9a9a,#666)"></div>
<div class="abs" style="left:1275.5px;top:39.5px;width:35px;height:36px;border:2.5px solid #2c2c2c;border-radius:6px;background:linear-gradient(#b4b4b4,#909090 50%,#6c6c6c 52%,#777)"></div>
<div class="abs" style="left:1287px;top:50px;width:17.5px;height:17.5px;background:#000"></div>
<div class="abs" style="left:1326.2px;top:8px;width:58.0px;height:37.5px;background:linear-gradient(#a4a4a4,#8c8c8c 45%,#646464 100%)"></div>
<div class="abs" style="left:1342.0px;top:13.8px;width:26px;height:26px;border-radius:13px;background:linear-gradient(#787878,#b2b2b2)"></div>
<div class="abs" style="left:1385.2px;top:8px;width:55.1px;height:37.5px;background:linear-gradient(#a4a4a4,#8c8c8c 45%,#646464 100%)"></div>
<div class="abs" style="left:1399.6px;top:13.8px;width:26px;height:26px;border-radius:13px;background:linear-gradient(#787878,#b2b2b2)"></div>
<div class="abs" style="left:1441.3px;top:8px;width:55.1px;height:37.5px;background:linear-gradient(#a4a4a4,#8c8c8c 45%,#646464 100%)"></div>
<div class="abs" style="left:1455.7px;top:13.8px;width:26px;height:26px;border-radius:13px;background:linear-gradient(#787878,#b2b2b2)"></div>
<div class="abs" style="left:1497.4px;top:8px;width:55.7px;height:37.5px;background:linear-gradient(#a4a4a4,#8c8c8c 45%,#646464 100%)"></div>
<div class="abs" style="left:1512.4px;top:13.8px;width:26px;height:26px;border-radius:13px;background:linear-gradient(#787878,#b2b2b2)"></div>
<div class="abs" style="left:1554.1px;top:8px;width:55.2px;height:37.5px;background:linear-gradient(#3e3e3e,#262626)"></div>
<div class="abs" style="left:1568.6px;top:13.8px;width:26px;height:26px;border-radius:13px;background:linear-gradient(#262626,#3a3a3a)"></div>
<div class="abs" style="left:1610.3px;top:8px;width:50.7px;height:37.5px;background:linear-gradient(#3e3e3e,#262626)"></div>
<div class="abs" style="left:1624.7px;top:13.8px;width:26px;height:26px;border-radius:13px;background:linear-gradient(#262626,#3a3a3a)"></div>
<div class="abs" style="left:1350px;top:21.8px;width:10px;height:10px;background:#3a3a3a"></div>
<div class="abs" style="left:1408.5px;top:19.8px;border-top:7px solid transparent;border-bottom:7px solid transparent;border-left:11px solid #3a3a3a"></div>
<svg style="left:1458.7px;top:16.8px" width="20" height="20" viewBox="-10 -10 20 20"><g fill="none" stroke="#3a3a3a" stroke-width="1.8"><path d="M-4.5-5.5H-7V5.5H-4.5M4.5-5.5H7V5.5H4.5"/><path d="M-3.5 0H3.5" stroke-width="1.4" stroke-dasharray="1.6 1.1"/></g></svg>
<svg style="left:1515.4px;top:16.8px" width="20" height="20" viewBox="-10 -10 20 20"><path d="M0 0C-2-3.6-7.5-3.6-7.5 0S-2 3.6 0 0S7.5-3.6 7.5 0S2 3.6 0 0Z" fill="none" stroke="#3a3a3a" stroke-width="2"/></svg>
<svg style="left:1571.6px;top:16.8px" width="20" height="20" viewBox="-10 -10 20 20"><g fill="none" stroke="#1a1a1a" stroke-width="3"><path d="M-6 -1.5A6.2 6.2 0 0 1 4.5 -4.4M6 1.5A6.2 6.2 0 0 1 -4.5 4.4"/></g><path d="M2-8.5L8-3.5L1-1.5ZM-2 8.5L-8 3.5L-1 1.5Z" fill="#1a1a1a"/></svg>
<div class="abs" style="left:1326.2px;top:47px;width:170.2px;height:40px;border-radius:7px 0 0 0;background:linear-gradient(#a4a4a4,#8c8c8c 45%,#646464 100%)"></div>
<div class="abs" style="left:1497.6px;top:47px;width:165px;height:40px;background:linear-gradient(#a4a4a4,#8c8c8c 45%,#646464 100%)"></div>
<div class="abs" style="left:1353.2px;top:53px;width:25px;height:25px;border-radius:13px;background:linear-gradient(#787878,#b2b2b2)"></div>
<svg style="left:1355.7px;top:55.4px" width="20" height="20" viewBox="-10 -10 20 20"><path d="M4.5-5L-0.3 0L4.5 5M-0.2-5L-5 0L-0.2 5" fill="none" stroke="#3a3a3a" stroke-width="2.2"/></svg>
<div class="abs" style="left:1619.5px;top:53px;width:25px;height:25px;border-radius:13px;background:linear-gradient(#787878,#b2b2b2)"></div>
<svg style="left:1622.0px;top:55.4px" width="20" height="20" viewBox="-10 -10 20 20"><path d="M-4.5-5L0.3 0L-4.5 5M0.2-5L5 0L0.2 5" fill="none" stroke="#3a3a3a" stroke-width="2.2"/></svg>
<span class="t" style="left:1398px;top:51.5px;font-size:27.5px;color:#3c3c3c;-webkit-text-stroke:.7px #3c3c3c;letter-spacing:.5px;filter:blur(.3px)">Back</span>
<span class="t" style="left:1531.6px;top:51.5px;font-size:27.5px;color:#3c3c3c;-webkit-text-stroke:.7px #3c3c3c;letter-spacing:1.9px;filter:blur(.3px)">Next</span>
</div>
</body></html>
